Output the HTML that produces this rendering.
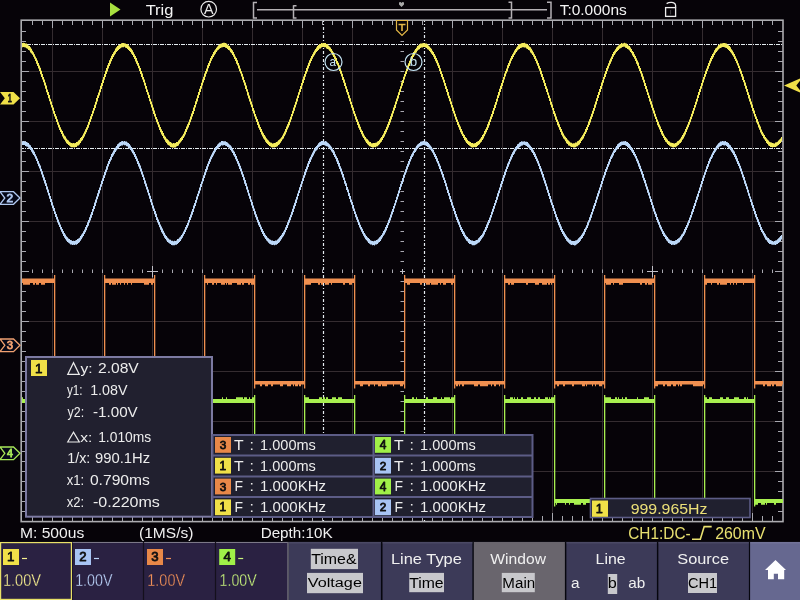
<!DOCTYPE html>
<html><head><meta charset="utf-8"><title>Scope</title>
<style>html,body{margin:0;padding:0;background:#060308;width:800px;height:600px;overflow:hidden}svg{display:block;will-change:transform}</style>
</head><body>
<svg width="800" height="600" viewBox="0 0 800 600">
<rect width="800" height="600" fill="#060308"/>
<path d="M52.5,21V521M102.5,21V521M152.5,21V521M202.5,21V521M252.5,21V521M302.5,21V521M352.5,21V521M452.5,21V521M502.5,21V521M552.5,21V521M602.5,21V521M652.5,21V521M702.5,21V521M752.5,21V521M21,71.5H782M21,121.5H782M21,171.5H782M21,221.5H782M21,321.5H782M21,371.5H782M21,421.5H782M21,471.5H782" stroke="#342c30" stroke-width="1" fill="none"/>
<path d="M32.5,20V25M32.5,521V516M32.5,269.5V273M42.5,20V25M42.5,521V516M42.5,269.5V273M52.5,20V28M52.5,521V513M52.5,269.5V273M62.5,20V25M62.5,521V516M62.5,269.5V273M72.5,20V25M72.5,521V516M72.5,269.5V273M82.5,20V25M82.5,521V516M82.5,269.5V273M92.5,20V25M92.5,521V516M92.5,269.5V273M102.5,20V28M102.5,521V513M102.5,269.5V273M112.5,20V25M112.5,521V516M112.5,269.5V273M122.5,20V25M122.5,521V516M122.5,269.5V273M132.5,20V25M132.5,521V516M132.5,269.5V273M142.5,20V25M142.5,521V516M142.5,269.5V273M152.5,20V28M152.5,521V513M152.5,269.5V273M162.5,20V25M162.5,521V516M162.5,269.5V273M172.5,20V25M172.5,521V516M172.5,269.5V273M182.5,20V25M182.5,521V516M182.5,269.5V273M192.5,20V25M192.5,521V516M192.5,269.5V273M202.5,20V28M202.5,521V513M202.5,269.5V273M212.5,20V25M212.5,521V516M212.5,269.5V273M222.5,20V25M222.5,521V516M222.5,269.5V273M232.5,20V25M232.5,521V516M232.5,269.5V273M242.5,20V25M242.5,521V516M242.5,269.5V273M252.5,20V28M252.5,521V513M252.5,269.5V273M262.5,20V25M262.5,521V516M262.5,269.5V273M272.5,20V25M272.5,521V516M272.5,269.5V273M282.5,20V25M282.5,521V516M282.5,269.5V273M292.5,20V25M292.5,521V516M292.5,269.5V273M302.5,20V28M302.5,521V513M302.5,269.5V273M312.5,20V25M312.5,521V516M312.5,269.5V273M322.5,20V25M322.5,521V516M322.5,269.5V273M332.5,20V25M332.5,521V516M332.5,269.5V273M342.5,20V25M342.5,521V516M342.5,269.5V273M352.5,20V28M352.5,521V513M352.5,269.5V273M362.5,20V25M362.5,521V516M362.5,269.5V273M372.5,20V25M372.5,521V516M372.5,269.5V273M382.5,20V25M382.5,521V516M382.5,269.5V273M392.5,20V25M392.5,521V516M392.5,269.5V273M402.5,20V28M402.5,521V513M402.5,269.5V273M412.5,20V25M412.5,521V516M412.5,269.5V273M422.5,20V25M422.5,521V516M422.5,269.5V273M432.5,20V25M432.5,521V516M432.5,269.5V273M442.5,20V25M442.5,521V516M442.5,269.5V273M452.5,20V28M452.5,521V513M452.5,269.5V273M462.5,20V25M462.5,521V516M462.5,269.5V273M472.5,20V25M472.5,521V516M472.5,269.5V273M482.5,20V25M482.5,521V516M482.5,269.5V273M492.5,20V25M492.5,521V516M492.5,269.5V273M502.5,20V28M502.5,521V513M502.5,269.5V273M512.5,20V25M512.5,521V516M512.5,269.5V273M522.5,20V25M522.5,521V516M522.5,269.5V273M532.5,20V25M532.5,521V516M532.5,269.5V273M542.5,20V25M542.5,521V516M542.5,269.5V273M552.5,20V28M552.5,521V513M552.5,269.5V273M562.5,20V25M562.5,521V516M562.5,269.5V273M572.5,20V25M572.5,521V516M572.5,269.5V273M582.5,20V25M582.5,521V516M582.5,269.5V273M592.5,20V25M592.5,521V516M592.5,269.5V273M602.5,20V28M602.5,521V513M602.5,269.5V273M612.5,20V25M612.5,521V516M612.5,269.5V273M622.5,20V25M622.5,521V516M622.5,269.5V273M632.5,20V25M632.5,521V516M632.5,269.5V273M642.5,20V25M642.5,521V516M642.5,269.5V273M652.5,20V28M652.5,521V513M652.5,269.5V273M662.5,20V25M662.5,521V516M662.5,269.5V273M672.5,20V25M672.5,521V516M672.5,269.5V273M682.5,20V25M682.5,521V516M682.5,269.5V273M692.5,20V25M692.5,521V516M692.5,269.5V273M702.5,20V28M702.5,521V513M702.5,269.5V273M712.5,20V25M712.5,521V516M712.5,269.5V273M722.5,20V25M722.5,521V516M722.5,269.5V273M732.5,20V25M732.5,521V516M732.5,269.5V273M742.5,20V25M742.5,521V516M742.5,269.5V273M752.5,20V28M752.5,521V513M752.5,269.5V273M762.5,20V25M762.5,521V516M762.5,269.5V273M772.5,20V25M772.5,521V516M772.5,269.5V273M21,31.5H26M783,31.5H778M400.5,31.5H404M21,41.5H26M783,41.5H778M400.5,41.5H404M21,51.5H26M783,51.5H778M400.5,51.5H404M21,61.5H26M783,61.5H778M400.5,61.5H404M21,71.5H29M783,71.5H775M400.5,71.5H404M21,81.5H26M783,81.5H778M400.5,81.5H404M21,91.5H26M783,91.5H778M400.5,91.5H404M21,101.5H26M783,101.5H778M400.5,101.5H404M21,111.5H26M783,111.5H778M400.5,111.5H404M21,121.5H29M783,121.5H775M400.5,121.5H404M21,131.5H26M783,131.5H778M400.5,131.5H404M21,141.5H26M783,141.5H778M400.5,141.5H404M21,151.5H26M783,151.5H778M400.5,151.5H404M21,161.5H26M783,161.5H778M400.5,161.5H404M21,171.5H29M783,171.5H775M400.5,171.5H404M21,181.5H26M783,181.5H778M400.5,181.5H404M21,191.5H26M783,191.5H778M400.5,191.5H404M21,201.5H26M783,201.5H778M400.5,201.5H404M21,211.5H26M783,211.5H778M400.5,211.5H404M21,221.5H29M783,221.5H775M400.5,221.5H404M21,231.5H26M783,231.5H778M400.5,231.5H404M21,241.5H26M783,241.5H778M400.5,241.5H404M21,251.5H26M783,251.5H778M400.5,251.5H404M21,261.5H26M783,261.5H778M400.5,261.5H404M21,271.5H29M783,271.5H775M400.5,271.5H404M21,281.5H26M783,281.5H778M400.5,281.5H404M21,291.5H26M783,291.5H778M400.5,291.5H404M21,301.5H26M783,301.5H778M400.5,301.5H404M21,311.5H26M783,311.5H778M400.5,311.5H404M21,321.5H29M783,321.5H775M400.5,321.5H404M21,331.5H26M783,331.5H778M400.5,331.5H404M21,341.5H26M783,341.5H778M400.5,341.5H404M21,351.5H26M783,351.5H778M400.5,351.5H404M21,361.5H26M783,361.5H778M400.5,361.5H404M21,371.5H29M783,371.5H775M400.5,371.5H404M21,381.5H26M783,381.5H778M400.5,381.5H404M21,391.5H26M783,391.5H778M400.5,391.5H404M21,401.5H26M783,401.5H778M400.5,401.5H404M21,411.5H26M783,411.5H778M400.5,411.5H404M21,421.5H29M783,421.5H775M400.5,421.5H404M21,431.5H26M783,431.5H778M400.5,431.5H404M21,441.5H26M783,441.5H778M400.5,441.5H404M21,451.5H26M783,451.5H778M400.5,451.5H404M21,461.5H26M783,461.5H778M400.5,461.5H404M21,471.5H29M783,471.5H775M400.5,471.5H404M21,481.5H26M783,481.5H778M400.5,481.5H404M21,491.5H26M783,491.5H778M400.5,491.5H404M21,501.5H26M783,501.5H778M400.5,501.5H404M21,511.5H26M783,511.5H778M400.5,511.5H404" stroke="#a8a8b0" stroke-width="1" fill="none"/>
<path d="M147,271.5H158M152.5,266V277.5M647,271.5H658M652.5,266V277.5M400,271.5H405M402.5,269V274" stroke="#c0c0c8" stroke-width="1" fill="none"/>
<rect x="21.2" y="20.2" width="761.8" height="501.4" fill="none" stroke="#acacb0" stroke-width="1.6"/>
<path d="M22,44.5H782M22,148.5H782" stroke="#e4ecf0" stroke-width="1.2" stroke-dasharray="1 1 4 1" stroke-dashoffset="4" fill="none"/>
<path d="M323.5,21V521M424.5,21V521" stroke="#e4ecf0" stroke-width="1.2" stroke-dasharray="1 2 3 2" stroke-dashoffset="5" fill="none"/>
<path d="M22,43.1h1V47.2h-1zM23,42.8h1V47.0h-1zM24,43.1h1V47.2h-1zM25,43.5h1V47.6h-1zM26,43.6h1V48.3h-1zM27,44.6h1V48.7h-1zM28,45.5h1V50.0h-1zM29,46.1h1V50.5h-1zM30,47.2h1V52.4h-1zM31,48.8h1V53.6h-1zM32,50.8h1V54.8h-1zM33,52.2h1V56.7h-1zM34,54.3h1V58.8h-1zM35,56.4h1V61.1h-1zM36,58.3h1V63.7h-1zM37,60.5h1V66.0h-1zM38,63.0h1V68.5h-1zM39,65.6h1V70.9h-1zM40,67.8h1V74.2h-1zM41,70.7h1V76.9h-1zM42,73.9h1V79.5h-1zM43,76.9h1V82.3h-1zM44,79.6h1V85.6h-1zM45,82.6h1V88.7h-1zM46,85.6h1V92.2h-1zM47,89.4h1V94.9h-1zM48,91.9h1V98.2h-1zM49,95.0h1V101.3h-1zM50,98.8h1V104.6h-1zM51,101.4h1V107.4h-1zM52,105.0h1V110.5h-1zM53,107.4h1V113.8h-1zM54,111.0h1V116.4h-1zM55,114.0h1V119.1h-1zM56,116.3h1V122.0h-1zM57,119.3h1V124.8h-1zM58,122.2h1V127.6h-1zM59,124.8h1V129.9h-1zM60,127.2h1V132.1h-1zM61,129.4h1V134.1h-1zM62,131.1h1V136.5h-1zM63,133.6h1V138.4h-1zM64,135.5h1V139.8h-1zM65,136.6h1V141.6h-1zM66,138.6h1V143.2h-1zM67,139.8h1V144.0h-1zM68,140.5h1V145.1h-1zM69,141.7h1V145.7h-1zM70,142.6h1V146.7h-1zM71,143.0h1V147.2h-1zM72,143.3h1V147.3h-1zM73,143.1h1V147.3h-1zM74,143.2h1V147.6h-1zM75,143.1h1V146.9h-1zM76,142.0h1V146.9h-1zM77,141.7h1V145.8h-1zM78,140.5h1V145.5h-1zM79,139.8h1V144.5h-1zM80,138.0h1V143.0h-1zM81,136.9h1V141.2h-1zM82,135.6h1V140.2h-1zM83,133.6h1V138.3h-1zM84,131.6h1V136.5h-1zM85,129.2h1V134.2h-1zM86,127.2h1V132.3h-1zM87,124.8h1V129.7h-1zM88,121.9h1V127.7h-1zM89,119.2h1V124.7h-1zM90,116.2h1V122.0h-1zM91,114.0h1V119.3h-1zM92,110.8h1V116.3h-1zM93,108.0h1V113.6h-1zM94,104.7h1V110.4h-1zM95,101.7h1V107.9h-1zM96,98.1h1V104.6h-1zM97,95.2h1V101.4h-1zM98,92.4h1V97.9h-1zM99,89.4h1V95.4h-1zM100,85.8h1V92.2h-1zM101,83.1h1V88.9h-1zM102,79.8h1V85.9h-1zM103,76.9h1V83.0h-1zM104,74.1h1V79.7h-1zM105,70.8h1V77.0h-1zM106,68.0h1V74.0h-1zM107,65.3h1V71.4h-1zM108,63.1h1V68.6h-1zM109,60.3h1V66.1h-1zM110,58.3h1V63.7h-1zM111,55.8h1V61.2h-1zM112,54.0h1V58.9h-1zM113,52.2h1V57.1h-1zM114,50.8h1V55.2h-1zM115,48.6h1V53.8h-1zM116,47.3h1V52.0h-1zM117,46.1h1V50.9h-1zM118,45.2h1V50.0h-1zM119,44.7h1V49.0h-1zM120,44.1h1V48.2h-1zM121,43.3h1V47.4h-1zM122,42.9h1V47.2h-1zM123,43.0h1V47.3h-1zM124,43.3h1V46.8h-1zM125,43.4h1V47.7h-1zM126,43.9h1V47.9h-1zM127,44.1h1V49.0h-1zM128,45.2h1V50.0h-1zM129,46.4h1V51.0h-1zM130,47.7h1V52.1h-1zM131,48.7h1V53.8h-1zM132,50.3h1V55.0h-1zM133,52.2h1V56.9h-1zM134,54.3h1V59.0h-1zM135,55.9h1V61.4h-1zM136,58.1h1V63.8h-1zM137,60.7h1V65.7h-1zM138,63.0h1V68.3h-1zM139,65.7h1V71.0h-1zM140,68.1h1V73.9h-1zM141,71.1h1V77.0h-1zM142,73.5h1V79.6h-1zM143,77.0h1V82.3h-1zM144,79.5h1V85.4h-1zM145,82.7h1V88.8h-1zM146,86.0h1V92.1h-1zM147,89.4h1V94.8h-1zM148,92.2h1V97.9h-1zM149,95.1h1V101.2h-1zM150,98.7h1V104.2h-1zM151,101.5h1V107.6h-1zM152,104.6h1V110.8h-1zM153,107.5h1V114.0h-1zM154,110.6h1V116.4h-1zM155,113.7h1V119.2h-1zM156,116.9h1V122.2h-1zM157,119.2h1V124.6h-1zM158,122.1h1V127.3h-1zM159,124.4h1V129.9h-1zM160,126.9h1V132.3h-1zM161,129.3h1V134.5h-1zM162,131.1h1V136.0h-1zM163,133.1h1V138.3h-1zM164,135.5h1V139.8h-1zM165,136.8h1V141.8h-1zM166,138.4h1V143.0h-1zM167,139.3h1V144.4h-1zM168,140.3h1V145.2h-1zM169,141.5h1V145.8h-1zM170,142.1h1V146.9h-1zM171,142.8h1V147.3h-1zM172,143.4h1V147.6h-1zM173,143.1h1V147.7h-1zM174,143.2h1V147.5h-1zM175,143.0h1V147.4h-1zM176,142.1h1V146.6h-1zM177,141.9h1V146.0h-1zM178,140.6h1V145.4h-1zM179,139.6h1V143.8h-1zM180,138.1h1V142.6h-1zM181,136.7h1V141.2h-1zM182,135.4h1V140.1h-1zM183,133.7h1V137.9h-1zM184,131.4h1V136.5h-1zM185,129.0h1V134.4h-1zM186,126.6h1V132.1h-1zM187,124.2h1V129.6h-1zM188,122.2h1V127.4h-1zM189,119.5h1V125.0h-1zM190,116.4h1V122.2h-1zM191,113.4h1V119.5h-1zM192,110.9h1V116.5h-1zM193,107.5h1V113.9h-1zM194,104.9h1V110.9h-1zM195,101.3h1V107.6h-1zM196,98.4h1V104.3h-1zM197,95.3h1V101.4h-1zM198,92.1h1V97.9h-1zM199,88.7h1V95.1h-1zM200,86.0h1V92.1h-1zM201,82.8h1V88.8h-1zM202,79.6h1V85.4h-1zM203,76.7h1V82.6h-1zM204,73.5h1V79.9h-1zM205,71.1h1V76.7h-1zM206,68.5h1V73.8h-1zM207,65.3h1V71.4h-1zM208,63.0h1V68.3h-1zM209,60.8h1V66.0h-1zM210,58.0h1V63.2h-1zM211,55.9h1V60.8h-1zM212,54.3h1V58.8h-1zM213,52.1h1V56.9h-1zM214,50.6h1V55.2h-1zM215,49.2h1V53.7h-1zM216,47.8h1V52.1h-1zM217,46.4h1V50.6h-1zM218,45.2h1V49.7h-1zM219,44.5h1V48.8h-1zM220,43.7h1V47.9h-1zM221,43.5h1V47.6h-1zM222,43.0h1V47.2h-1zM223,42.8h1V47.1h-1zM224,42.8h1V47.0h-1zM225,43.1h1V47.8h-1zM226,43.4h1V48.0h-1zM227,44.5h1V49.1h-1zM228,45.4h1V50.1h-1zM229,46.0h1V50.6h-1zM230,47.7h1V52.3h-1zM231,49.1h1V53.2h-1zM232,50.3h1V55.1h-1zM233,52.0h1V56.7h-1zM234,54.2h1V59.1h-1zM235,56.4h1V60.9h-1zM236,58.1h1V63.7h-1zM237,60.2h1V65.6h-1zM238,63.0h1V68.6h-1zM239,65.5h1V71.2h-1zM240,68.4h1V73.6h-1zM241,71.2h1V76.4h-1zM242,73.8h1V79.7h-1zM243,76.7h1V82.4h-1zM244,80.0h1V85.5h-1zM245,82.6h1V89.1h-1zM246,85.6h1V91.6h-1zM247,89.3h1V95.4h-1zM248,92.2h1V98.4h-1zM249,95.4h1V101.4h-1zM250,98.5h1V104.5h-1zM251,101.5h1V107.3h-1zM252,104.6h1V110.9h-1zM253,108.0h1V113.6h-1zM254,110.6h1V116.5h-1zM255,113.9h1V119.2h-1zM256,116.5h1V121.9h-1zM257,119.0h1V125.1h-1zM258,121.8h1V127.7h-1zM259,124.4h1V129.8h-1zM260,126.9h1V132.1h-1zM261,128.9h1V134.5h-1zM262,131.6h1V136.6h-1zM263,133.2h1V138.4h-1zM264,135.0h1V139.8h-1zM265,136.6h1V141.7h-1zM266,138.2h1V143.1h-1zM267,139.4h1V144.1h-1zM268,140.5h1V144.9h-1zM269,141.7h1V146.0h-1zM270,142.6h1V146.6h-1zM271,142.8h1V147.2h-1zM272,143.4h1V147.6h-1zM273,143.3h1V147.2h-1zM274,143.1h1V147.4h-1zM275,142.8h1V147.0h-1zM276,142.0h1V146.8h-1zM277,141.4h1V146.2h-1zM278,140.3h1V144.9h-1zM279,139.5h1V144.3h-1zM280,138.5h1V142.8h-1zM281,137.2h1V141.3h-1zM282,135.4h1V139.6h-1zM283,133.6h1V138.5h-1zM284,131.4h1V136.3h-1zM285,128.9h1V134.4h-1zM286,126.6h1V132.2h-1zM287,124.3h1V129.6h-1zM288,121.9h1V127.6h-1zM289,119.6h1V125.2h-1zM290,116.8h1V122.2h-1zM291,113.9h1V119.4h-1zM292,110.7h1V116.3h-1zM293,107.4h1V113.6h-1zM294,104.7h1V110.7h-1zM295,101.7h1V107.5h-1zM296,98.4h1V104.5h-1zM297,95.5h1V101.5h-1zM298,92.3h1V97.9h-1zM299,89.2h1V94.8h-1zM300,86.1h1V92.1h-1zM301,82.9h1V89.1h-1zM302,79.6h1V85.4h-1zM303,76.4h1V83.0h-1zM304,74.1h1V79.9h-1zM305,71.0h1V76.7h-1zM306,67.9h1V73.7h-1zM307,65.5h1V71.4h-1zM308,62.8h1V68.4h-1zM309,60.2h1V66.1h-1zM310,58.2h1V63.2h-1zM311,56.0h1V61.1h-1zM312,54.3h1V58.7h-1zM313,52.2h1V56.7h-1zM314,50.6h1V55.2h-1zM315,49.0h1V53.4h-1zM316,47.4h1V52.0h-1zM317,46.1h1V50.9h-1zM318,44.9h1V50.1h-1zM319,44.2h1V48.7h-1zM320,44.0h1V48.4h-1zM321,43.1h1V47.6h-1zM322,43.2h1V47.0h-1zM323,42.9h1V47.0h-1zM324,43.0h1V47.3h-1zM325,43.1h1V47.3h-1zM326,43.9h1V48.4h-1zM327,44.1h1V49.1h-1zM328,45.5h1V49.4h-1zM329,46.4h1V50.8h-1zM330,47.4h1V51.8h-1zM331,48.9h1V53.2h-1zM332,50.8h1V55.3h-1zM333,52.2h1V57.1h-1zM334,54.2h1V59.0h-1zM335,56.3h1V61.0h-1zM336,58.1h1V63.7h-1zM337,60.9h1V65.6h-1zM338,62.8h1V68.5h-1zM339,65.3h1V70.9h-1zM340,68.2h1V73.7h-1zM341,70.7h1V76.6h-1zM342,73.7h1V80.0h-1zM343,76.9h1V82.7h-1zM344,79.6h1V86.0h-1zM345,82.8h1V88.7h-1zM346,86.2h1V92.2h-1zM347,89.3h1V94.8h-1zM348,92.1h1V98.2h-1zM349,95.2h1V101.2h-1zM350,98.3h1V104.2h-1zM351,101.8h1V107.7h-1zM352,105.0h1V110.5h-1zM353,107.6h1V113.8h-1zM354,110.9h1V116.3h-1zM355,113.8h1V119.6h-1zM356,116.6h1V121.9h-1zM357,119.2h1V124.9h-1zM358,121.7h1V127.7h-1zM359,124.2h1V129.8h-1zM360,126.7h1V132.0h-1zM361,129.4h1V134.2h-1zM362,131.1h1V136.6h-1zM363,133.6h1V138.1h-1zM364,135.4h1V139.8h-1zM365,136.9h1V141.4h-1zM366,138.5h1V142.9h-1zM367,139.3h1V144.2h-1zM368,140.4h1V145.2h-1zM369,141.8h1V146.2h-1zM370,142.0h1V146.5h-1zM371,143.2h1V147.1h-1zM372,143.2h1V147.4h-1zM373,143.1h1V147.4h-1zM374,143.0h1V147.0h-1zM375,142.8h1V147.3h-1zM376,142.6h1V146.4h-1zM377,141.4h1V146.3h-1zM378,140.9h1V145.3h-1zM379,139.8h1V144.3h-1zM380,138.2h1V142.7h-1zM381,137.1h1V141.7h-1zM382,135.3h1V140.0h-1zM383,133.5h1V138.1h-1zM384,131.1h1V136.4h-1zM385,129.3h1V134.3h-1zM386,126.8h1V132.3h-1zM387,124.2h1V129.8h-1zM388,121.7h1V127.5h-1zM389,119.1h1V125.1h-1zM390,116.3h1V122.5h-1zM391,113.4h1V119.5h-1zM392,110.7h1V116.7h-1zM393,107.5h1V113.6h-1zM394,104.8h1V110.4h-1zM395,101.4h1V107.9h-1zM396,98.6h1V104.3h-1zM397,95.5h1V101.3h-1zM398,92.3h1V98.6h-1zM399,89.3h1V94.9h-1zM400,86.2h1V92.0h-1zM401,82.6h1V88.6h-1zM402,80.1h1V85.7h-1zM403,76.7h1V82.9h-1zM404,74.1h1V79.4h-1zM405,71.2h1V76.5h-1zM406,68.4h1V74.0h-1zM407,65.5h1V70.9h-1zM408,63.2h1V68.3h-1zM409,60.8h1V66.1h-1zM410,58.4h1V63.5h-1zM411,55.9h1V61.1h-1zM412,54.3h1V59.3h-1zM413,51.9h1V56.9h-1zM414,50.5h1V55.5h-1zM415,48.9h1V53.3h-1zM416,47.8h1V52.4h-1zM417,46.0h1V50.8h-1zM418,45.2h1V49.8h-1zM419,44.5h1V49.2h-1zM420,43.6h1V47.9h-1zM421,43.6h1V47.5h-1zM422,43.2h1V47.4h-1zM423,42.9h1V47.0h-1zM424,43.3h1V46.9h-1zM425,43.4h1V47.4h-1zM426,43.5h1V48.1h-1zM427,44.3h1V49.2h-1zM428,45.4h1V49.8h-1zM429,46.5h1V51.0h-1zM430,47.8h1V52.3h-1zM431,48.7h1V53.8h-1zM432,50.8h1V55.0h-1zM433,52.1h1V56.7h-1zM434,54.1h1V59.0h-1zM435,55.8h1V61.2h-1zM436,58.0h1V63.3h-1zM437,60.3h1V65.8h-1zM438,62.7h1V68.1h-1zM439,65.3h1V70.9h-1zM440,68.2h1V73.9h-1zM441,71.2h1V76.9h-1zM442,73.9h1V79.5h-1zM443,77.0h1V82.5h-1zM444,79.8h1V85.8h-1zM445,82.9h1V88.9h-1zM446,86.2h1V91.9h-1zM447,89.1h1V95.4h-1zM448,91.9h1V98.3h-1zM449,95.7h1V101.3h-1zM450,98.3h1V104.3h-1zM451,101.6h1V107.6h-1zM452,105.0h1V111.0h-1zM453,107.5h1V113.4h-1zM454,110.7h1V116.4h-1zM455,113.8h1V119.5h-1zM456,116.7h1V122.1h-1zM457,119.4h1V125.0h-1zM458,122.1h1V127.2h-1zM459,124.4h1V129.7h-1zM460,126.6h1V132.2h-1zM461,129.1h1V134.2h-1zM462,131.2h1V136.0h-1zM463,133.7h1V137.9h-1zM464,135.1h1V140.0h-1zM465,137.1h1V141.4h-1zM466,138.1h1V143.0h-1zM467,139.8h1V144.0h-1zM468,140.9h1V144.9h-1zM469,141.6h1V145.7h-1zM470,142.0h1V146.6h-1zM471,142.9h1V147.2h-1zM472,143.0h1V147.5h-1zM473,143.5h1V147.2h-1zM474,143.3h1V147.0h-1zM475,142.9h1V147.2h-1zM476,142.0h1V146.9h-1zM477,141.4h1V146.1h-1zM478,141.0h1V145.1h-1zM479,139.7h1V144.3h-1zM480,138.6h1V142.8h-1zM481,136.9h1V141.7h-1zM482,135.0h1V139.9h-1zM483,133.7h1V138.4h-1zM484,131.1h1V136.3h-1zM485,129.3h1V134.3h-1zM486,127.2h1V132.3h-1zM487,124.2h1V129.9h-1zM488,121.8h1V127.7h-1zM489,119.5h1V125.2h-1zM490,116.5h1V122.0h-1zM491,114.0h1V119.3h-1zM492,110.7h1V116.7h-1zM493,107.9h1V114.0h-1zM494,104.8h1V110.6h-1zM495,101.9h1V107.9h-1zM496,98.7h1V104.8h-1zM497,95.3h1V101.4h-1zM498,92.1h1V98.1h-1zM499,88.7h1V95.4h-1zM500,85.7h1V92.0h-1zM501,83.1h1V89.0h-1zM502,79.9h1V86.0h-1zM503,76.9h1V82.7h-1zM504,73.6h1V79.4h-1zM505,70.9h1V76.4h-1zM506,68.5h1V73.6h-1zM507,65.2h1V71.4h-1zM508,62.9h1V68.3h-1zM509,60.4h1V66.0h-1zM510,58.3h1V63.5h-1zM511,55.9h1V60.8h-1zM512,54.3h1V59.0h-1zM513,52.5h1V56.9h-1zM514,50.5h1V54.9h-1zM515,48.9h1V53.4h-1zM516,47.4h1V52.0h-1zM517,46.2h1V50.5h-1zM518,45.1h1V49.5h-1zM519,44.0h1V48.9h-1zM520,43.7h1V48.0h-1zM521,43.2h1V47.7h-1zM522,42.9h1V47.3h-1zM523,43.1h1V47.3h-1zM524,42.8h1V47.4h-1zM525,43.4h1V47.5h-1zM526,43.7h1V48.4h-1zM527,44.3h1V48.9h-1zM528,45.3h1V50.0h-1zM529,46.4h1V50.5h-1zM530,47.3h1V52.4h-1zM531,48.8h1V53.6h-1zM532,50.4h1V55.0h-1zM533,52.2h1V56.7h-1zM534,54.3h1V59.0h-1zM535,56.1h1V61.1h-1zM536,58.6h1V63.6h-1zM537,60.5h1V65.7h-1zM538,63.1h1V68.4h-1zM539,65.7h1V70.8h-1zM540,67.9h1V74.2h-1zM541,70.8h1V77.0h-1zM542,73.9h1V79.9h-1zM543,76.9h1V82.8h-1zM544,79.7h1V86.0h-1zM545,83.1h1V89.0h-1zM546,86.2h1V92.0h-1zM547,88.7h1V94.7h-1zM548,92.4h1V98.1h-1zM549,95.4h1V101.1h-1zM550,98.2h1V104.7h-1zM551,101.7h1V107.5h-1zM552,104.6h1V110.3h-1zM553,108.1h1V113.9h-1zM554,110.9h1V116.6h-1zM555,113.4h1V119.8h-1zM556,116.6h1V122.0h-1zM557,119.4h1V125.2h-1zM558,121.7h1V127.2h-1zM559,124.3h1V129.7h-1zM560,127.0h1V131.9h-1zM561,129.0h1V134.7h-1zM562,131.6h1V136.4h-1zM563,133.6h1V138.4h-1zM564,135.6h1V139.6h-1zM565,136.7h1V141.3h-1zM566,138.0h1V143.2h-1zM567,139.4h1V143.9h-1zM568,140.5h1V145.5h-1zM569,141.6h1V145.7h-1zM570,142.5h1V146.5h-1zM571,142.7h1V146.9h-1zM572,143.5h1V147.1h-1zM573,143.3h1V147.5h-1zM574,143.3h1V147.4h-1zM575,142.6h1V147.2h-1zM576,142.5h1V146.5h-1zM577,141.3h1V146.2h-1zM578,140.8h1V145.3h-1zM579,139.8h1V144.5h-1zM580,138.3h1V142.9h-1zM581,136.8h1V141.1h-1zM582,135.2h1V139.7h-1zM583,133.6h1V138.4h-1zM584,131.7h1V136.2h-1zM585,129.1h1V134.1h-1zM586,127.1h1V132.2h-1zM587,124.7h1V130.1h-1zM588,121.6h1V127.1h-1zM589,119.3h1V125.0h-1zM590,116.6h1V122.5h-1zM591,113.7h1V119.2h-1zM592,110.7h1V116.7h-1zM593,107.9h1V113.8h-1zM594,104.5h1V110.7h-1zM595,101.6h1V107.8h-1zM596,98.3h1V104.5h-1zM597,95.0h1V101.1h-1zM598,92.0h1V98.0h-1zM599,89.0h1V94.9h-1zM600,85.9h1V92.1h-1zM601,82.6h1V89.0h-1zM602,79.9h1V85.7h-1zM603,76.9h1V82.7h-1zM604,73.8h1V79.3h-1zM605,70.9h1V76.9h-1zM606,68.1h1V74.1h-1zM607,65.8h1V70.9h-1zM608,63.3h1V68.4h-1zM609,60.6h1V65.8h-1zM610,58.4h1V63.7h-1zM611,56.4h1V61.4h-1zM612,54.0h1V59.0h-1zM613,52.0h1V56.8h-1zM614,50.8h1V55.0h-1zM615,49.3h1V53.4h-1zM616,47.4h1V52.1h-1zM617,46.4h1V50.9h-1zM618,45.5h1V50.0h-1zM619,44.6h1V48.7h-1zM620,44.0h1V48.2h-1zM621,43.1h1V47.7h-1zM622,43.4h1V47.1h-1zM623,43.2h1V46.8h-1zM624,42.8h1V46.8h-1zM625,43.3h1V47.7h-1zM626,43.4h1V47.9h-1zM627,44.4h1V49.0h-1zM628,45.5h1V49.6h-1zM629,46.0h1V50.6h-1zM630,47.6h1V52.0h-1zM631,49.0h1V53.2h-1zM632,50.9h1V55.5h-1zM633,52.0h1V57.1h-1zM634,54.3h1V58.8h-1zM635,56.1h1V61.0h-1zM636,58.3h1V63.8h-1zM637,60.6h1V65.8h-1zM638,62.6h1V68.5h-1zM639,65.9h1V71.0h-1zM640,68.1h1V73.6h-1zM641,71.1h1V76.8h-1zM642,73.6h1V79.7h-1zM643,76.5h1V82.6h-1zM644,79.8h1V85.9h-1zM645,82.9h1V89.0h-1zM646,86.1h1V91.8h-1zM647,89.2h1V95.1h-1zM648,92.4h1V98.0h-1zM649,95.5h1V101.4h-1zM650,98.6h1V104.5h-1zM651,101.3h1V107.7h-1zM652,104.4h1V110.4h-1zM653,107.8h1V113.4h-1zM654,110.6h1V116.5h-1zM655,113.8h1V119.1h-1zM656,116.8h1V122.0h-1zM657,119.4h1V125.2h-1zM658,121.8h1V127.3h-1zM659,124.6h1V129.6h-1zM660,126.6h1V132.0h-1zM661,129.1h1V134.5h-1zM662,131.1h1V136.0h-1zM663,133.5h1V138.1h-1zM664,135.6h1V140.1h-1zM665,137.0h1V141.7h-1zM666,138.3h1V142.6h-1zM667,139.6h1V144.0h-1zM668,141.0h1V144.9h-1zM669,141.5h1V145.7h-1zM670,142.4h1V146.6h-1zM671,142.8h1V146.8h-1zM672,143.1h1V147.2h-1zM673,143.3h1V147.4h-1zM674,143.5h1V147.1h-1zM675,143.0h1V147.2h-1zM676,142.4h1V146.6h-1zM677,141.3h1V145.8h-1zM678,140.8h1V145.1h-1zM679,139.8h1V143.8h-1zM680,138.6h1V143.0h-1zM681,136.8h1V141.7h-1zM682,134.9h1V139.7h-1zM683,133.3h1V138.5h-1zM684,131.6h1V136.4h-1zM685,129.1h1V134.6h-1zM686,126.7h1V132.0h-1zM687,124.4h1V129.6h-1zM688,122.0h1V127.3h-1zM689,119.6h1V124.8h-1zM690,116.7h1V122.2h-1zM691,113.8h1V119.2h-1zM692,110.8h1V116.6h-1zM693,108.0h1V113.8h-1zM694,104.9h1V110.4h-1zM695,101.7h1V107.5h-1zM696,98.7h1V104.6h-1zM697,95.2h1V101.4h-1zM698,92.0h1V97.9h-1zM699,89.1h1V95.0h-1zM700,86.2h1V91.9h-1zM701,83.1h1V88.8h-1zM702,79.7h1V85.7h-1zM703,76.9h1V82.5h-1zM704,74.1h1V79.5h-1zM705,70.7h1V76.8h-1zM706,68.4h1V74.0h-1zM707,65.8h1V71.1h-1zM708,62.9h1V68.8h-1zM709,60.6h1V65.9h-1zM710,57.9h1V63.6h-1zM711,56.0h1V61.2h-1zM712,54.1h1V58.9h-1zM713,52.4h1V57.2h-1zM714,50.3h1V55.0h-1zM715,48.6h1V53.2h-1zM716,47.8h1V52.1h-1zM717,46.4h1V50.7h-1zM718,44.9h1V49.5h-1zM719,44.6h1V48.6h-1zM720,43.6h1V47.9h-1zM721,43.6h1V47.6h-1zM722,43.2h1V47.0h-1zM723,43.1h1V47.1h-1zM724,43.0h1V47.3h-1zM725,43.3h1V47.8h-1zM726,43.4h1V48.0h-1zM727,44.5h1V49.1h-1zM728,45.3h1V49.9h-1zM729,46.1h1V51.0h-1zM730,47.2h1V52.3h-1zM731,49.2h1V53.6h-1zM732,50.5h1V55.2h-1zM733,52.3h1V56.8h-1zM734,53.9h1V59.0h-1zM735,56.3h1V61.0h-1zM736,58.4h1V63.2h-1zM737,60.5h1V65.6h-1zM738,63.3h1V68.1h-1zM739,65.8h1V71.2h-1zM740,68.5h1V73.8h-1zM741,70.8h1V76.7h-1zM742,74.0h1V79.9h-1zM743,76.5h1V82.3h-1zM744,79.9h1V85.7h-1zM745,82.6h1V88.7h-1zM746,85.7h1V91.8h-1zM747,88.9h1V95.0h-1zM748,92.3h1V98.4h-1zM749,95.1h1V101.6h-1zM750,98.4h1V104.4h-1zM751,101.5h1V107.7h-1zM752,104.5h1V110.9h-1zM753,108.0h1V113.6h-1zM754,110.6h1V116.4h-1zM755,113.9h1V119.1h-1zM756,116.5h1V122.5h-1zM757,119.0h1V124.6h-1zM758,121.8h1V127.4h-1zM759,124.4h1V129.8h-1zM760,126.6h1V132.5h-1zM761,129.6h1V134.5h-1zM762,131.7h1V136.0h-1zM763,133.6h1V138.3h-1zM764,134.9h1V139.6h-1zM765,137.0h1V141.1h-1zM766,138.3h1V142.9h-1zM767,139.6h1V144.0h-1zM768,140.4h1V145.4h-1zM769,141.7h1V146.0h-1zM770,142.2h1V146.9h-1zM771,142.5h1V147.0h-1zM772,143.1h1V147.4h-1zM773,143.2h1V147.1h-1zM774,143.5h1V147.0h-1zM775,142.6h1V146.9h-1zM776,142.3h1V146.4h-1zM777,141.7h1V145.7h-1zM778,140.6h1V144.9h-1zM779,139.5h1V144.0h-1zM780,138.5h1V142.9h-1zM781,137.0h1V141.3h-1z" fill="#f4ec5c"/>
<path d="M22,141.5h1V145.0h-1zM23,140.9h1V145.0h-1zM24,141.5h1V145.0h-1zM25,141.4h1V145.9h-1zM26,142.0h1V146.4h-1zM27,142.4h1V146.8h-1zM28,143.0h1V147.7h-1zM29,144.5h1V148.8h-1zM30,145.3h1V150.1h-1zM31,147.0h1V151.8h-1zM32,148.2h1V153.4h-1zM33,150.2h1V155.1h-1zM34,151.8h1V156.6h-1zM35,154.3h1V158.7h-1zM36,156.3h1V161.0h-1zM37,158.4h1V163.8h-1zM38,160.9h1V166.2h-1zM39,163.6h1V168.6h-1zM40,165.6h1V171.2h-1zM41,168.7h1V174.6h-1zM42,171.3h1V177.5h-1zM43,174.5h1V180.5h-1zM44,177.2h1V183.5h-1zM45,180.1h1V186.1h-1zM46,183.2h1V189.5h-1zM47,186.5h1V192.5h-1zM48,189.5h1V195.5h-1zM49,192.9h1V198.8h-1zM50,196.1h1V202.0h-1zM51,199.1h1V205.4h-1zM52,202.3h1V208.3h-1zM53,205.4h1V211.0h-1zM54,208.0h1V214.0h-1zM55,211.5h1V216.9h-1zM56,213.9h1V219.5h-1zM57,216.7h1V222.4h-1zM58,219.4h1V224.7h-1zM59,222.3h1V227.1h-1zM60,224.6h1V229.6h-1zM61,227.1h1V231.8h-1zM62,229.0h1V233.7h-1zM63,230.9h1V236.0h-1zM64,233.0h1V237.7h-1zM65,234.6h1V239.2h-1zM66,236.2h1V240.8h-1zM67,237.2h1V242.1h-1zM68,238.5h1V242.7h-1zM69,239.0h1V243.4h-1zM70,240.1h1V244.4h-1zM71,240.2h1V244.6h-1zM72,241.1h1V244.9h-1zM73,240.8h1V244.8h-1zM74,240.9h1V244.9h-1zM75,240.5h1V244.6h-1zM76,240.0h1V244.7h-1zM77,239.1h1V243.9h-1zM78,238.5h1V243.0h-1zM79,237.7h1V242.2h-1zM80,236.0h1V240.7h-1zM81,234.6h1V239.3h-1zM82,233.3h1V237.6h-1zM83,231.3h1V236.1h-1zM84,229.4h1V233.9h-1zM85,227.1h1V232.2h-1zM86,224.9h1V230.2h-1zM87,222.2h1V227.6h-1zM88,220.0h1V225.8h-1zM89,217.2h1V222.8h-1zM90,214.5h1V220.6h-1zM91,211.9h1V217.8h-1zM92,209.1h1V215.0h-1zM93,205.9h1V211.6h-1zM94,202.6h1V208.9h-1zM95,199.5h1V206.0h-1zM96,196.5h1V202.7h-1zM97,193.2h1V199.3h-1zM98,190.1h1V196.6h-1zM99,187.4h1V193.5h-1zM100,184.2h1V190.2h-1zM101,180.8h1V186.8h-1zM102,178.2h1V184.1h-1zM103,175.3h1V180.9h-1zM104,171.9h1V177.9h-1zM105,169.4h1V175.2h-1zM106,166.2h1V172.3h-1zM107,163.8h1V169.7h-1zM108,161.0h1V166.5h-1zM109,158.9h1V163.9h-1zM110,156.8h1V161.6h-1zM111,154.1h1V159.7h-1zM112,152.6h1V157.0h-1zM113,150.6h1V155.5h-1zM114,148.7h1V153.7h-1zM115,147.5h1V152.1h-1zM116,145.9h1V150.4h-1zM117,144.2h1V149.2h-1zM118,143.6h1V148.1h-1zM119,142.6h1V146.7h-1zM120,142.0h1V146.1h-1zM121,141.3h1V145.5h-1zM122,141.1h1V145.4h-1zM123,141.4h1V144.8h-1zM124,141.0h1V145.2h-1zM125,141.6h1V145.3h-1zM126,141.5h1V146.2h-1zM127,142.5h1V146.6h-1zM128,142.9h1V147.9h-1zM129,144.1h1V148.7h-1zM130,145.6h1V150.0h-1zM131,147.1h1V151.5h-1zM132,148.5h1V153.2h-1zM133,150.2h1V154.8h-1zM134,151.9h1V157.1h-1zM135,154.0h1V159.1h-1zM136,156.3h1V161.3h-1zM137,158.5h1V163.9h-1zM138,160.9h1V166.4h-1zM139,163.2h1V168.8h-1zM140,165.6h1V171.5h-1zM141,168.5h1V174.5h-1zM142,171.5h1V177.0h-1zM143,174.5h1V180.1h-1zM144,177.4h1V183.7h-1zM145,180.6h1V186.6h-1zM146,183.4h1V189.4h-1zM147,186.7h1V192.4h-1zM148,189.5h1V195.6h-1zM149,193.0h1V198.8h-1zM150,195.8h1V202.3h-1zM151,199.1h1V205.2h-1zM152,202.5h1V208.5h-1zM153,205.6h1V211.1h-1zM154,208.4h1V214.3h-1zM155,211.1h1V216.9h-1zM156,213.8h1V220.0h-1zM157,217.2h1V222.5h-1zM158,219.5h1V224.8h-1zM159,222.1h1V227.3h-1zM160,224.4h1V229.8h-1zM161,226.5h1V232.2h-1zM162,228.6h1V233.8h-1zM163,230.7h1V235.8h-1zM164,232.7h1V237.8h-1zM165,234.8h1V239.0h-1zM166,236.0h1V240.6h-1zM167,237.4h1V242.1h-1zM168,238.5h1V242.7h-1zM169,239.4h1V243.6h-1zM170,239.8h1V244.0h-1zM171,240.7h1V244.9h-1zM172,240.8h1V245.2h-1zM173,241.3h1V245.3h-1zM174,240.8h1V245.2h-1zM175,240.9h1V244.8h-1zM176,240.4h1V244.7h-1zM177,239.0h1V244.1h-1zM178,238.8h1V242.9h-1zM179,237.4h1V242.0h-1zM180,236.4h1V241.0h-1zM181,234.9h1V239.3h-1zM182,233.4h1V237.8h-1zM183,231.6h1V235.8h-1zM184,229.4h1V234.1h-1zM185,227.0h1V232.1h-1zM186,225.0h1V229.8h-1zM187,222.7h1V227.8h-1zM188,220.0h1V225.4h-1zM189,217.1h1V222.6h-1zM190,214.4h1V220.0h-1zM191,211.5h1V217.5h-1zM192,208.9h1V214.8h-1zM193,205.6h1V212.1h-1zM194,202.9h1V208.5h-1zM195,200.0h1V206.0h-1zM196,196.5h1V202.8h-1zM197,193.8h1V199.6h-1zM198,190.7h1V196.2h-1zM199,187.4h1V193.6h-1zM200,184.0h1V190.4h-1zM201,181.4h1V187.0h-1zM202,178.3h1V183.8h-1zM203,175.3h1V181.2h-1zM204,172.2h1V177.9h-1zM205,169.1h1V175.3h-1zM206,166.2h1V172.2h-1zM207,163.8h1V169.7h-1zM208,161.3h1V166.6h-1zM209,158.7h1V164.0h-1zM210,156.6h1V161.7h-1zM211,154.4h1V159.3h-1zM212,152.4h1V157.2h-1zM213,150.8h1V155.5h-1zM214,149.1h1V153.4h-1zM215,147.1h1V151.7h-1zM216,145.9h1V150.0h-1zM217,144.5h1V148.9h-1zM218,143.4h1V147.8h-1zM219,142.4h1V147.0h-1zM220,142.2h1V146.2h-1zM221,141.1h1V145.3h-1zM222,141.1h1V145.6h-1zM223,141.3h1V145.2h-1zM224,141.3h1V145.1h-1zM225,141.3h1V145.7h-1zM226,141.9h1V146.1h-1zM227,142.4h1V147.0h-1zM228,143.5h1V147.5h-1zM229,144.4h1V148.7h-1zM230,145.2h1V150.0h-1zM231,146.6h1V151.4h-1zM232,148.6h1V153.1h-1zM233,150.4h1V155.2h-1zM234,151.7h1V156.7h-1zM235,154.1h1V159.2h-1zM236,155.9h1V161.3h-1zM237,158.7h1V163.8h-1zM238,161.1h1V166.3h-1zM239,163.3h1V169.1h-1zM240,165.8h1V171.2h-1zM241,168.4h1V174.6h-1zM242,171.4h1V177.0h-1zM243,174.3h1V180.2h-1zM244,177.3h1V183.7h-1zM245,180.1h1V186.1h-1zM246,183.3h1V189.5h-1zM247,186.5h1V192.6h-1zM248,189.8h1V195.8h-1zM249,193.2h1V198.8h-1zM250,195.9h1V201.8h-1zM251,199.4h1V205.4h-1zM252,202.1h1V208.2h-1zM253,205.6h1V210.9h-1zM254,208.4h1V214.4h-1zM255,211.2h1V217.3h-1zM256,214.3h1V219.7h-1zM257,216.8h1V222.6h-1zM258,219.8h1V225.2h-1zM259,222.1h1V227.1h-1zM260,224.5h1V229.6h-1zM261,226.7h1V232.1h-1zM262,229.0h1V234.0h-1zM263,231.0h1V235.9h-1zM264,233.1h1V237.6h-1zM265,234.7h1V239.1h-1zM266,236.1h1V240.4h-1zM267,237.4h1V241.6h-1zM268,238.2h1V242.8h-1zM269,239.3h1V243.7h-1zM270,239.7h1V244.2h-1zM271,240.5h1V244.8h-1zM272,240.6h1V244.9h-1zM273,241.0h1V244.8h-1zM274,241.1h1V245.2h-1zM275,240.6h1V244.7h-1zM276,240.4h1V244.7h-1zM277,239.4h1V244.0h-1zM278,238.5h1V243.1h-1zM279,237.3h1V242.3h-1zM280,235.9h1V240.7h-1zM281,234.8h1V239.2h-1zM282,233.0h1V237.5h-1zM283,231.5h1V236.3h-1zM284,229.7h1V234.4h-1zM285,227.2h1V232.3h-1zM286,225.1h1V229.9h-1zM287,222.2h1V228.0h-1zM288,219.8h1V225.2h-1zM289,217.2h1V222.7h-1zM290,214.8h1V220.3h-1zM291,211.7h1V217.3h-1zM292,208.7h1V214.8h-1zM293,205.6h1V212.1h-1zM294,202.7h1V208.7h-1zM295,199.5h1V205.9h-1zM296,196.8h1V202.9h-1zM297,193.4h1V199.4h-1zM298,190.6h1V196.1h-1zM299,187.2h1V193.1h-1zM300,184.3h1V190.0h-1zM301,181.3h1V187.0h-1zM302,178.2h1V183.8h-1zM303,175.2h1V180.9h-1zM304,171.8h1V177.7h-1zM305,169.0h1V175.2h-1zM306,166.4h1V172.2h-1zM307,163.6h1V169.4h-1zM308,161.1h1V167.0h-1zM309,158.6h1V164.0h-1zM310,156.8h1V162.0h-1zM311,154.4h1V159.6h-1zM312,152.5h1V157.2h-1zM313,150.6h1V155.4h-1zM314,148.5h1V153.4h-1zM315,147.1h1V151.6h-1zM316,145.9h1V150.6h-1zM317,144.7h1V149.4h-1zM318,143.3h1V147.6h-1zM319,142.3h1V146.7h-1zM320,141.8h1V146.0h-1zM321,141.1h1V145.6h-1zM322,140.9h1V145.0h-1zM323,141.0h1V144.8h-1zM324,141.5h1V145.3h-1zM325,141.0h1V145.7h-1zM326,141.5h1V146.3h-1zM327,142.4h1V146.6h-1zM328,143.2h1V147.5h-1zM329,144.2h1V148.7h-1zM330,145.4h1V149.8h-1zM331,146.7h1V151.4h-1zM332,148.5h1V152.7h-1zM333,150.1h1V154.9h-1zM334,151.6h1V156.9h-1zM335,154.2h1V158.8h-1zM336,156.2h1V161.4h-1zM337,158.0h1V164.0h-1zM338,160.4h1V166.5h-1zM339,163.0h1V169.1h-1zM340,166.3h1V171.6h-1zM341,168.6h1V174.5h-1zM342,171.4h1V177.4h-1zM343,174.1h1V180.0h-1zM344,177.4h1V183.7h-1zM345,180.8h1V186.1h-1zM346,183.3h1V189.9h-1zM347,187.0h1V192.3h-1zM348,189.5h1V195.9h-1zM349,192.9h1V199.0h-1zM350,195.9h1V202.3h-1zM351,199.5h1V204.8h-1zM352,202.0h1V208.5h-1zM353,205.1h1V211.1h-1zM354,208.4h1V214.0h-1zM355,211.6h1V217.2h-1zM356,214.2h1V219.8h-1zM357,216.8h1V222.3h-1zM358,219.4h1V224.9h-1zM359,222.2h1V227.6h-1zM360,224.7h1V229.4h-1zM361,227.0h1V231.8h-1zM362,228.7h1V233.7h-1zM363,231.1h1V235.8h-1zM364,233.0h1V237.4h-1zM365,234.6h1V239.3h-1zM366,236.1h1V240.3h-1zM367,237.3h1V241.6h-1zM368,238.1h1V242.9h-1zM369,239.0h1V243.7h-1zM370,240.2h1V244.5h-1zM371,240.7h1V244.6h-1zM372,241.0h1V245.3h-1zM373,241.2h1V244.9h-1zM374,240.7h1V245.4h-1zM375,240.7h1V244.6h-1zM376,239.9h1V244.6h-1zM377,239.5h1V244.0h-1zM378,238.5h1V242.8h-1zM379,237.3h1V242.1h-1zM380,236.2h1V241.0h-1zM381,235.1h1V239.3h-1zM382,233.3h1V237.4h-1zM383,231.1h1V235.8h-1zM384,229.6h1V234.5h-1zM385,226.9h1V232.6h-1zM386,225.1h1V230.4h-1zM387,222.8h1V228.0h-1zM388,219.7h1V225.2h-1zM389,217.6h1V223.0h-1zM390,214.4h1V220.4h-1zM391,211.5h1V217.5h-1zM392,209.0h1V214.4h-1zM393,206.1h1V212.1h-1zM394,203.2h1V208.6h-1zM395,199.9h1V205.4h-1zM396,196.8h1V202.5h-1zM397,193.8h1V199.6h-1zM398,190.4h1V196.5h-1zM399,187.1h1V193.3h-1zM400,183.8h1V189.9h-1zM401,181.2h1V186.7h-1zM402,178.1h1V184.1h-1zM403,174.7h1V180.9h-1zM404,172.3h1V177.8h-1zM405,169.2h1V174.8h-1zM406,166.3h1V172.5h-1zM407,163.8h1V169.4h-1zM408,161.0h1V166.7h-1zM409,159.0h1V164.5h-1zM410,156.2h1V161.4h-1zM411,154.2h1V159.3h-1zM412,152.6h1V157.0h-1zM413,150.7h1V155.4h-1zM414,149.0h1V153.0h-1zM415,147.4h1V152.0h-1zM416,145.7h1V150.4h-1zM417,144.5h1V148.8h-1zM418,143.7h1V147.8h-1zM419,142.9h1V146.8h-1zM420,141.8h1V146.2h-1zM421,141.5h1V145.8h-1zM422,141.3h1V145.2h-1zM423,140.9h1V145.1h-1zM424,141.2h1V145.3h-1zM425,141.4h1V145.5h-1zM426,141.5h1V145.9h-1zM427,142.1h1V147.1h-1zM428,142.9h1V147.5h-1zM429,144.2h1V149.2h-1zM430,145.6h1V149.8h-1zM431,146.7h1V151.3h-1zM432,148.4h1V152.8h-1zM433,149.8h1V154.7h-1zM434,152.2h1V157.0h-1zM435,154.0h1V159.0h-1zM436,156.1h1V161.5h-1zM437,158.3h1V163.6h-1zM438,161.1h1V166.2h-1zM439,163.4h1V168.9h-1zM440,165.8h1V171.5h-1zM441,169.0h1V174.4h-1zM442,171.5h1V177.4h-1zM443,174.1h1V180.1h-1zM444,177.4h1V183.0h-1zM445,180.2h1V186.2h-1zM446,183.3h1V189.7h-1zM447,186.8h1V192.9h-1zM448,189.8h1V195.8h-1zM449,192.9h1V199.3h-1zM450,196.0h1V202.0h-1zM451,199.3h1V205.4h-1zM452,202.2h1V208.1h-1zM453,205.5h1V211.0h-1zM454,208.1h1V214.3h-1zM455,210.9h1V217.3h-1zM456,213.9h1V219.9h-1zM457,216.7h1V222.6h-1zM458,219.3h1V224.7h-1zM459,221.8h1V227.2h-1zM460,224.7h1V230.0h-1zM461,227.1h1V231.9h-1zM462,229.1h1V234.1h-1zM463,230.9h1V236.0h-1zM464,232.5h1V237.5h-1zM465,234.8h1V239.2h-1zM466,236.2h1V240.8h-1zM467,236.9h1V241.6h-1zM468,238.5h1V242.9h-1zM469,239.0h1V244.0h-1zM470,239.9h1V244.1h-1zM471,240.4h1V244.5h-1zM472,240.6h1V245.2h-1zM473,240.9h1V245.3h-1zM474,240.9h1V245.3h-1zM475,240.5h1V244.8h-1zM476,240.1h1V244.3h-1zM477,239.7h1V243.6h-1zM478,238.2h1V242.8h-1zM479,237.3h1V242.2h-1zM480,236.0h1V240.8h-1zM481,234.9h1V239.2h-1zM482,233.4h1V237.8h-1zM483,231.2h1V236.4h-1zM484,229.5h1V234.5h-1zM485,226.9h1V232.1h-1zM486,224.6h1V230.2h-1zM487,222.2h1V228.0h-1zM488,220.1h1V225.3h-1zM489,217.4h1V222.9h-1zM490,215.0h1V220.5h-1zM491,211.8h1V217.5h-1zM492,208.7h1V214.5h-1zM493,206.1h1V211.8h-1zM494,203.0h1V208.7h-1zM495,200.1h1V205.5h-1zM496,196.8h1V202.7h-1zM497,193.2h1V199.7h-1zM498,190.5h1V196.4h-1zM499,187.4h1V193.3h-1zM500,183.8h1V189.9h-1zM501,181.1h1V187.2h-1zM502,177.8h1V184.0h-1zM503,174.9h1V181.2h-1zM504,171.8h1V177.7h-1zM505,169.2h1V175.3h-1zM506,166.4h1V171.9h-1zM507,163.6h1V169.1h-1zM508,161.5h1V166.7h-1zM509,159.0h1V164.3h-1zM510,156.4h1V161.6h-1zM511,154.2h1V159.5h-1zM512,152.2h1V157.2h-1zM513,150.5h1V155.0h-1zM514,148.8h1V153.7h-1zM515,146.9h1V151.4h-1zM516,146.0h1V150.2h-1zM517,144.3h1V149.0h-1zM518,143.7h1V147.9h-1zM519,142.5h1V147.2h-1zM520,141.9h1V146.4h-1zM521,141.3h1V145.8h-1zM522,141.5h1V145.4h-1zM523,141.4h1V144.8h-1zM524,141.2h1V144.9h-1zM525,141.7h1V145.5h-1zM526,141.8h1V145.9h-1zM527,142.1h1V147.1h-1zM528,143.2h1V147.8h-1zM529,144.4h1V149.2h-1zM530,145.7h1V149.9h-1zM531,147.1h1V151.7h-1zM532,148.4h1V153.0h-1zM533,150.2h1V155.1h-1zM534,152.1h1V157.0h-1zM535,153.8h1V158.9h-1zM536,156.2h1V161.2h-1zM537,158.4h1V163.5h-1zM538,160.7h1V166.1h-1zM539,163.4h1V169.0h-1zM540,166.0h1V171.6h-1zM541,168.4h1V174.4h-1zM542,171.6h1V177.6h-1zM543,174.1h1V180.5h-1zM544,177.5h1V183.5h-1zM545,180.3h1V186.3h-1zM546,183.4h1V189.8h-1zM547,186.5h1V192.8h-1zM548,189.8h1V195.9h-1zM549,193.1h1V199.1h-1zM550,196.0h1V202.4h-1zM551,199.3h1V205.3h-1zM552,202.6h1V208.1h-1zM553,205.1h1V211.0h-1zM554,208.2h1V213.9h-1zM555,211.3h1V217.3h-1zM556,214.3h1V220.0h-1zM557,217.1h1V222.5h-1zM558,219.3h1V225.2h-1zM559,222.1h1V227.4h-1zM560,224.3h1V229.9h-1zM561,226.6h1V231.9h-1zM562,229.1h1V234.0h-1zM563,230.9h1V235.8h-1zM564,232.5h1V237.2h-1zM565,234.3h1V238.9h-1zM566,235.7h1V240.8h-1zM567,237.3h1V241.8h-1zM568,238.2h1V242.8h-1zM569,239.4h1V243.8h-1zM570,239.7h1V244.4h-1zM571,240.7h1V245.0h-1zM572,241.0h1V244.8h-1zM573,241.0h1V245.0h-1zM574,240.9h1V245.4h-1zM575,240.6h1V245.2h-1zM576,240.2h1V244.6h-1zM577,239.6h1V243.7h-1zM578,238.3h1V243.1h-1zM579,237.2h1V241.9h-1zM580,236.3h1V240.7h-1zM581,234.7h1V239.0h-1zM582,233.3h1V237.9h-1zM583,231.6h1V235.9h-1zM584,229.1h1V234.6h-1zM585,227.4h1V232.0h-1zM586,225.2h1V229.8h-1zM587,222.3h1V228.0h-1zM588,220.2h1V225.4h-1zM589,217.2h1V222.6h-1zM590,214.4h1V220.5h-1zM591,212.0h1V217.7h-1zM592,208.7h1V214.6h-1zM593,205.6h1V211.6h-1zM594,202.9h1V208.7h-1zM595,199.8h1V206.0h-1zM596,196.6h1V202.8h-1zM597,193.2h1V199.4h-1zM598,190.6h1V196.5h-1zM599,187.5h1V193.6h-1zM600,184.2h1V190.1h-1zM601,181.1h1V187.3h-1zM602,177.7h1V184.1h-1zM603,175.2h1V180.8h-1zM604,171.9h1V177.7h-1zM605,169.0h1V175.2h-1zM606,166.7h1V172.0h-1zM607,164.0h1V169.5h-1zM608,161.6h1V166.8h-1zM609,159.1h1V164.4h-1zM610,156.5h1V161.8h-1zM611,154.6h1V159.1h-1zM612,152.4h1V157.6h-1zM613,150.4h1V155.5h-1zM614,149.1h1V153.1h-1zM615,147.5h1V151.9h-1zM616,145.9h1V150.2h-1zM617,144.3h1V149.2h-1zM618,143.5h1V147.9h-1zM619,142.7h1V147.1h-1zM620,142.0h1V146.2h-1zM621,141.6h1V145.5h-1zM622,141.4h1V145.0h-1zM623,141.3h1V145.1h-1zM624,141.3h1V145.0h-1zM625,141.1h1V145.6h-1zM626,141.8h1V146.0h-1zM627,142.1h1V147.0h-1zM628,143.1h1V147.9h-1zM629,144.1h1V148.8h-1zM630,145.5h1V150.0h-1zM631,146.9h1V151.4h-1zM632,148.4h1V153.0h-1zM633,149.9h1V155.1h-1zM634,152.1h1V156.5h-1zM635,154.1h1V158.6h-1zM636,155.9h1V161.3h-1zM637,158.5h1V163.4h-1zM638,160.5h1V166.4h-1zM639,163.2h1V169.0h-1zM640,165.8h1V171.5h-1zM641,168.7h1V174.4h-1zM642,171.2h1V177.7h-1zM643,174.1h1V180.5h-1zM644,177.7h1V183.2h-1zM645,180.1h1V186.4h-1zM646,183.5h1V189.4h-1zM647,186.4h1V192.7h-1zM648,189.4h1V195.5h-1zM649,192.6h1V198.6h-1zM650,196.3h1V202.0h-1zM651,199.1h1V204.9h-1zM652,202.2h1V208.5h-1zM653,205.3h1V211.4h-1zM654,208.2h1V214.2h-1zM655,211.4h1V216.9h-1zM656,213.8h1V219.9h-1zM657,217.0h1V222.4h-1zM658,219.5h1V224.8h-1zM659,222.0h1V227.5h-1zM660,224.8h1V229.5h-1zM661,226.7h1V231.6h-1zM662,229.2h1V234.0h-1zM663,231.1h1V236.0h-1zM664,232.8h1V237.1h-1zM665,234.4h1V238.9h-1zM666,235.7h1V240.6h-1zM667,237.0h1V241.4h-1zM668,238.6h1V243.0h-1zM669,239.4h1V243.5h-1zM670,240.3h1V244.1h-1zM671,240.5h1V245.1h-1zM672,241.0h1V244.8h-1zM673,240.9h1V244.8h-1zM674,240.9h1V245.1h-1zM675,240.3h1V244.5h-1zM676,240.0h1V244.3h-1zM677,239.1h1V243.6h-1zM678,238.3h1V242.8h-1zM679,237.4h1V242.3h-1zM680,236.3h1V240.6h-1zM681,234.5h1V239.5h-1zM682,233.5h1V237.5h-1zM683,231.5h1V235.9h-1zM684,229.1h1V234.4h-1zM685,226.9h1V232.4h-1zM686,224.9h1V230.0h-1zM687,222.4h1V227.8h-1zM688,220.3h1V225.4h-1zM689,217.5h1V222.9h-1zM690,214.9h1V219.9h-1zM691,211.5h1V217.4h-1zM692,209.0h1V214.4h-1zM693,205.8h1V212.1h-1zM694,203.1h1V208.8h-1zM695,199.8h1V205.9h-1zM696,196.6h1V202.5h-1zM697,193.8h1V199.7h-1zM698,190.7h1V196.7h-1zM699,187.6h1V193.1h-1zM700,184.2h1V190.4h-1zM701,181.0h1V187.2h-1zM702,177.8h1V184.1h-1zM703,175.3h1V181.1h-1zM704,172.3h1V177.7h-1zM705,169.6h1V174.7h-1zM706,166.2h1V172.0h-1zM707,164.1h1V169.1h-1zM708,161.0h1V166.8h-1zM709,158.5h1V163.8h-1zM710,156.8h1V161.6h-1zM711,154.6h1V159.1h-1zM712,152.5h1V157.4h-1zM713,150.7h1V155.0h-1zM714,148.7h1V153.3h-1zM715,147.4h1V151.8h-1zM716,145.7h1V150.2h-1zM717,144.5h1V148.7h-1zM718,143.3h1V147.7h-1zM719,142.6h1V146.7h-1zM720,141.6h1V146.3h-1zM721,141.5h1V145.7h-1zM722,140.9h1V145.0h-1zM723,141.2h1V145.2h-1zM724,141.3h1V145.4h-1zM725,141.1h1V145.3h-1zM726,141.9h1V146.0h-1zM727,142.2h1V147.0h-1zM728,143.1h1V148.0h-1zM729,144.4h1V148.7h-1zM730,145.2h1V150.2h-1zM731,147.1h1V151.8h-1zM732,148.3h1V153.3h-1zM733,150.2h1V154.9h-1zM734,151.6h1V157.1h-1zM735,153.9h1V159.2h-1zM736,155.7h1V161.5h-1zM737,158.2h1V164.0h-1zM738,161.0h1V166.1h-1zM739,163.2h1V168.6h-1zM740,165.7h1V171.3h-1zM741,168.6h1V174.3h-1zM742,171.6h1V177.4h-1zM743,174.6h1V180.3h-1zM744,177.1h1V183.7h-1zM745,180.6h1V186.3h-1zM746,183.4h1V189.3h-1zM747,186.4h1V192.5h-1zM748,189.7h1V195.7h-1zM749,193.3h1V198.6h-1zM750,196.4h1V201.9h-1zM751,199.3h1V205.5h-1zM752,202.2h1V207.9h-1zM753,205.1h1V211.0h-1zM754,208.3h1V214.3h-1zM755,211.0h1V217.3h-1zM756,214.1h1V219.6h-1zM757,216.9h1V222.3h-1zM758,219.3h1V224.9h-1zM759,221.9h1V227.1h-1zM760,224.3h1V230.0h-1zM761,227.0h1V231.9h-1zM762,229.2h1V233.5h-1zM763,231.0h1V235.5h-1zM764,232.7h1V237.5h-1zM765,234.3h1V239.4h-1zM766,236.2h1V240.2h-1zM767,237.5h1V241.7h-1zM768,238.0h1V242.9h-1zM769,239.2h1V243.9h-1zM770,240.0h1V244.1h-1zM771,240.4h1V244.4h-1zM772,241.1h1V244.7h-1zM773,241.4h1V244.7h-1zM774,240.9h1V244.8h-1zM775,240.5h1V245.1h-1zM776,240.2h1V244.2h-1zM777,239.2h1V244.0h-1zM778,238.2h1V243.0h-1zM779,237.3h1V242.2h-1zM780,236.0h1V241.1h-1zM781,234.9h1V239.5h-1z" fill="#bcd8f8"/>
<path d="M22,278.6H55V283H22zM41,283h2v1.8h-2zM28,283h2v1.8h-2zM36,283h2v1.8h-2zM36,283h3v1.8h-3zM26,283h2v1.8h-2zM23,283h1v1.8h-1zM33,283h2v1.8h-2zM43,283h2v1.8h-2zM24,283h3v1.8h-3zM54,381H105V384.5H54zM78,384.5h2v1.8h-2zM73,384.5h2v1.8h-2zM99,384.5h2v1.8h-2zM95,384.5h1v1.8h-1zM102,384.5h1v1.8h-1zM88,384.5h3v1.8h-3zM57,384.5h1v1.8h-1zM75,384.5h3v1.8h-3zM74,384.5h3v1.8h-3zM65,384.5h1v1.8h-1zM75,384.5h2v1.8h-2zM69,384.5h2v1.8h-2zM97,384.5h1v1.8h-1zM89,384.5h1v1.8h-1zM104,278.6H155V283H104zM147,283h2v1.8h-2zM110,283h1v1.8h-1zM110,283h1v1.8h-1zM131,283h1v1.8h-1zM114,283h2v1.8h-2zM112,283h1v1.8h-1zM117,283h1v1.8h-1zM120,283h1v1.8h-1zM124,283h1v1.8h-1zM109,283h1v1.8h-1zM151,283h2v1.8h-2zM127,283h1v1.8h-1zM144,283h3v1.8h-3zM112,283h2v1.8h-2zM154,381H205V384.5H154zM168,384.5h2v1.8h-2zM164,384.5h1v1.8h-1zM174,384.5h1v1.8h-1zM200,384.5h3v1.8h-3zM162,384.5h1v1.8h-1zM189,384.5h1v1.8h-1zM194,384.5h1v1.8h-1zM160,384.5h3v1.8h-3zM179,384.5h3v1.8h-3zM196,384.5h1v1.8h-1zM162,384.5h3v1.8h-3zM169,384.5h1v1.8h-1zM183,384.5h2v1.8h-2zM191,384.5h2v1.8h-2zM204,278.6H255V283H204zM237,283h1v1.8h-1zM226,283h1v1.8h-1zM228,283h1v1.8h-1zM212,283h2v1.8h-2zM228,283h2v1.8h-2zM221,283h2v1.8h-2zM207,283h1v1.8h-1zM251,283h3v1.8h-3zM216,283h1v1.8h-1zM238,283h3v1.8h-3zM229,283h3v1.8h-3zM242,283h2v1.8h-2zM223,283h2v1.8h-2zM248,283h2v1.8h-2zM254,381H305V384.5H254zM260,384.5h2v1.8h-2zM271,384.5h2v1.8h-2zM281,384.5h2v1.8h-2zM293,384.5h1v1.8h-1zM295,384.5h2v1.8h-2zM287,384.5h1v1.8h-1zM266,384.5h2v1.8h-2zM281,384.5h1v1.8h-1zM299,384.5h2v1.8h-2zM282,384.5h1v1.8h-1zM288,384.5h3v1.8h-3zM297,384.5h1v1.8h-1zM280,384.5h2v1.8h-2zM265,384.5h1v1.8h-1zM304,278.6H355V283H304zM321,283h2v1.8h-2zM350,283h2v1.8h-2zM349,283h2v1.8h-2zM318,283h2v1.8h-2zM305,283h3v1.8h-3zM343,283h2v1.8h-2zM328,283h1v1.8h-1zM309,283h1v1.8h-1zM308,283h3v1.8h-3zM331,283h1v1.8h-1zM326,283h3v1.8h-3zM327,283h2v1.8h-2zM305,283h2v1.8h-2zM325,283h2v1.8h-2zM354,381H405V384.5H354zM401,384.5h2v1.8h-2zM384,384.5h3v1.8h-3zM360,384.5h2v1.8h-2zM393,384.5h1v1.8h-1zM362,384.5h1v1.8h-1zM378,384.5h1v1.8h-1zM374,384.5h1v1.8h-1zM368,384.5h2v1.8h-2zM382,384.5h2v1.8h-2zM400,384.5h2v1.8h-2zM385,384.5h2v1.8h-2zM360,384.5h2v1.8h-2zM386,384.5h1v1.8h-1zM379,384.5h2v1.8h-2zM404,278.6H455V283H404zM443,283h3v1.8h-3zM431,283h2v1.8h-2zM408,283h1v1.8h-1zM440,283h1v1.8h-1zM451,283h2v1.8h-2zM409,283h1v1.8h-1zM426,283h3v1.8h-3zM432,283h3v1.8h-3zM420,283h2v1.8h-2zM443,283h1v1.8h-1zM428,283h2v1.8h-2zM408,283h1v1.8h-1zM407,283h2v1.8h-2zM435,283h3v1.8h-3zM454,381H505V384.5H454zM491,384.5h1v1.8h-1zM474,384.5h3v1.8h-3zM486,384.5h2v1.8h-2zM476,384.5h2v1.8h-2zM456,384.5h2v1.8h-2zM459,384.5h1v1.8h-1zM483,384.5h3v1.8h-3zM480,384.5h3v1.8h-3zM477,384.5h1v1.8h-1zM494,384.5h2v1.8h-2zM484,384.5h2v1.8h-2zM494,384.5h2v1.8h-2zM462,384.5h2v1.8h-2zM499,384.5h1v1.8h-1zM504,278.6H555V283H504zM535,283h2v1.8h-2zM512,283h1v1.8h-1zM548,283h1v1.8h-1zM548,283h2v1.8h-2zM545,283h2v1.8h-2zM508,283h2v1.8h-2zM535,283h3v1.8h-3zM542,283h2v1.8h-2zM551,283h1v1.8h-1zM526,283h2v1.8h-2zM542,283h3v1.8h-3zM537,283h2v1.8h-2zM551,283h1v1.8h-1zM511,283h3v1.8h-3zM554,381H605V384.5H554zM572,384.5h2v1.8h-2zM599,384.5h3v1.8h-3zM557,384.5h2v1.8h-2zM586,384.5h1v1.8h-1zM595,384.5h1v1.8h-1zM558,384.5h1v1.8h-1zM572,384.5h2v1.8h-2zM592,384.5h1v1.8h-1zM582,384.5h3v1.8h-3zM572,384.5h1v1.8h-1zM563,384.5h2v1.8h-2zM554,384.5h1v1.8h-1zM563,384.5h1v1.8h-1zM563,384.5h2v1.8h-2zM604,278.6H655V283H604zM619,283h1v1.8h-1zM640,283h2v1.8h-2zM606,283h2v1.8h-2zM621,283h2v1.8h-2zM608,283h2v1.8h-2zM649,283h1v1.8h-1zM649,283h3v1.8h-3zM620,283h3v1.8h-3zM649,283h1v1.8h-1zM645,283h2v1.8h-2zM613,283h1v1.8h-1zM609,283h2v1.8h-2zM648,283h1v1.8h-1zM645,283h2v1.8h-2zM654,381H705V384.5H654zM663,384.5h2v1.8h-2zM696,384.5h3v1.8h-3zM655,384.5h2v1.8h-2zM667,384.5h2v1.8h-2zM693,384.5h2v1.8h-2zM700,384.5h3v1.8h-3zM695,384.5h2v1.8h-2zM657,384.5h1v1.8h-1zM673,384.5h3v1.8h-3zM670,384.5h1v1.8h-1zM678,384.5h1v1.8h-1zM669,384.5h2v1.8h-2zM680,384.5h2v1.8h-2zM699,384.5h3v1.8h-3zM704,278.6H755V283H704zM718,283h1v1.8h-1zM726,283h1v1.8h-1zM720,283h2v1.8h-2zM743,283h1v1.8h-1zM717,283h1v1.8h-1zM704,283h2v1.8h-2zM711,283h1v1.8h-1zM705,283h2v1.8h-2zM733,283h1v1.8h-1zM721,283h2v1.8h-2zM730,283h1v1.8h-1zM705,283h1v1.8h-1zM723,283h3v1.8h-3zM736,283h1v1.8h-1zM754,381H783V384.5H754zM763,384.5h2v1.8h-2zM767,384.5h1v1.8h-1zM772,384.5h2v1.8h-2zM779,384.5h3v1.8h-3zM776,384.5h3v1.8h-3zM776,384.5h1v1.8h-1zM776,384.5h3v1.8h-3zM768,384.5h3v1.8h-3zM54,275h1.3V388.5h-1.3zM104,275h1.3V388.5h-1.3zM154,275h1.3V388.5h-1.3zM204,275h1.3V388.5h-1.3zM254,275h1.3V388.5h-1.3zM304,275h1.3V388.5h-1.3zM354,275h1.3V388.5h-1.3zM404,275h1.3V388.5h-1.3zM454,275h1.3V388.5h-1.3zM504,275h1.3V388.5h-1.3zM554,275h1.3V388.5h-1.3zM604,275h1.3V388.5h-1.3zM654,275h1.3V388.5h-1.3zM704,275h1.3V388.5h-1.3zM754,275h1.3V388.5h-1.3z" fill="#f09050"/>
<path d="M22,399H55V403H22zM50,397.2h1v1.8h-1zM40,397.2h1v1.8h-1zM33,397.2h3v1.8h-3zM27,397.2h3v1.8h-3zM30,397.2h2v1.8h-2zM25,397.2h2v1.8h-2zM47,397.2h2v1.8h-2zM22,397.2h1v1.8h-1zM49,397.2h2v1.8h-2zM54,499H105V503H54zM97,503h2v1.8h-2zM101,503h2v1.8h-2zM88,503h1v1.8h-1zM82,503h3v1.8h-3zM57,503h2v1.8h-2zM77,503h2v1.8h-2zM62,503h3v1.8h-3zM97,503h2v1.8h-2zM60,503h2v1.8h-2zM60,503h3v1.8h-3zM86,503h1v1.8h-1zM62,503h2v1.8h-2zM74,503h2v1.8h-2zM79,503h1v1.8h-1zM104,399H155V403H104zM133,397.2h1v1.8h-1zM149,397.2h3v1.8h-3zM115,397.2h1v1.8h-1zM113,397.2h2v1.8h-2zM133,397.2h2v1.8h-2zM136,397.2h2v1.8h-2zM119,397.2h1v1.8h-1zM110,397.2h1v1.8h-1zM152,397.2h1v1.8h-1zM136,397.2h1v1.8h-1zM115,397.2h1v1.8h-1zM147,397.2h2v1.8h-2zM130,397.2h2v1.8h-2zM151,397.2h3v1.8h-3zM154,499H205V503H154zM177,503h2v1.8h-2zM191,503h3v1.8h-3zM191,503h3v1.8h-3zM183,503h2v1.8h-2zM190,503h1v1.8h-1zM161,503h1v1.8h-1zM162,503h1v1.8h-1zM200,503h2v1.8h-2zM195,503h2v1.8h-2zM181,503h1v1.8h-1zM197,503h1v1.8h-1zM156,503h1v1.8h-1zM179,503h2v1.8h-2zM156,503h3v1.8h-3zM204,399H255V403H204zM252,397.2h2v1.8h-2zM245,397.2h1v1.8h-1zM236,397.2h2v1.8h-2zM222,397.2h1v1.8h-1zM241,397.2h2v1.8h-2zM239,397.2h2v1.8h-2zM226,397.2h1v1.8h-1zM211,397.2h2v1.8h-2zM237,397.2h3v1.8h-3zM239,397.2h1v1.8h-1zM204,397.2h2v1.8h-2zM249,397.2h1v1.8h-1zM210,397.2h2v1.8h-2zM244,397.2h3v1.8h-3zM254,499H305V503H254zM298,503h1v1.8h-1zM286,503h3v1.8h-3zM262,503h2v1.8h-2zM284,503h2v1.8h-2zM258,503h1v1.8h-1zM271,503h1v1.8h-1zM295,503h3v1.8h-3zM298,503h2v1.8h-2zM283,503h1v1.8h-1zM301,503h2v1.8h-2zM276,503h1v1.8h-1zM283,503h3v1.8h-3zM285,503h3v1.8h-3zM271,503h1v1.8h-1zM304,399H355V403H304zM304,397.2h2v1.8h-2zM334,397.2h2v1.8h-2zM333,397.2h1v1.8h-1zM341,397.2h1v1.8h-1zM326,397.2h2v1.8h-2zM338,397.2h3v1.8h-3zM319,397.2h2v1.8h-2zM306,397.2h3v1.8h-3zM323,397.2h2v1.8h-2zM307,397.2h1v1.8h-1zM332,397.2h2v1.8h-2zM340,397.2h1v1.8h-1zM333,397.2h2v1.8h-2zM321,397.2h1v1.8h-1zM354,499H405V503H354zM370,503h1v1.8h-1zM382,503h2v1.8h-2zM365,503h1v1.8h-1zM379,503h2v1.8h-2zM397,503h2v1.8h-2zM370,503h3v1.8h-3zM383,503h3v1.8h-3zM371,503h2v1.8h-2zM371,503h2v1.8h-2zM400,503h3v1.8h-3zM360,503h2v1.8h-2zM390,503h1v1.8h-1zM370,503h1v1.8h-1zM390,503h3v1.8h-3zM404,399H455V403H404zM441,397.2h1v1.8h-1zM444,397.2h1v1.8h-1zM434,397.2h3v1.8h-3zM426,397.2h2v1.8h-2zM451,397.2h3v1.8h-3zM451,397.2h1v1.8h-1zM452,397.2h2v1.8h-2zM444,397.2h1v1.8h-1zM416,397.2h1v1.8h-1zM412,397.2h2v1.8h-2zM433,397.2h2v1.8h-2zM445,397.2h3v1.8h-3zM452,397.2h2v1.8h-2zM448,397.2h2v1.8h-2zM454,499H505V503H454zM458,503h3v1.8h-3zM493,503h2v1.8h-2zM458,503h1v1.8h-1zM464,503h3v1.8h-3zM482,503h1v1.8h-1zM456,503h2v1.8h-2zM496,503h2v1.8h-2zM455,503h2v1.8h-2zM455,503h3v1.8h-3zM454,503h2v1.8h-2zM487,503h1v1.8h-1zM470,503h1v1.8h-1zM488,503h2v1.8h-2zM489,503h3v1.8h-3zM504,399H555V403H504zM510,397.2h3v1.8h-3zM529,397.2h2v1.8h-2zM546,397.2h2v1.8h-2zM521,397.2h2v1.8h-2zM521,397.2h1v1.8h-1zM549,397.2h1v1.8h-1zM551,397.2h3v1.8h-3zM527,397.2h2v1.8h-2zM512,397.2h1v1.8h-1zM538,397.2h2v1.8h-2zM534,397.2h2v1.8h-2zM517,397.2h1v1.8h-1zM514,397.2h1v1.8h-1zM545,397.2h1v1.8h-1zM554,499H605V503H554zM578,503h2v1.8h-2zM574,503h3v1.8h-3zM600,503h2v1.8h-2zM569,503h1v1.8h-1zM580,503h1v1.8h-1zM576,503h2v1.8h-2zM583,503h3v1.8h-3zM556,503h1v1.8h-1zM565,503h1v1.8h-1zM565,503h1v1.8h-1zM578,503h2v1.8h-2zM598,503h1v1.8h-1zM580,503h1v1.8h-1zM594,503h1v1.8h-1zM604,399H655V403H604zM607,397.2h2v1.8h-2zM637,397.2h1v1.8h-1zM647,397.2h2v1.8h-2zM646,397.2h2v1.8h-2zM606,397.2h2v1.8h-2zM615,397.2h1v1.8h-1zM608,397.2h3v1.8h-3zM618,397.2h1v1.8h-1zM625,397.2h2v1.8h-2zM625,397.2h1v1.8h-1zM615,397.2h2v1.8h-2zM644,397.2h2v1.8h-2zM604,397.2h3v1.8h-3zM622,397.2h1v1.8h-1zM654,499H705V503H654zM689,503h1v1.8h-1zM688,503h1v1.8h-1zM701,503h1v1.8h-1zM677,503h2v1.8h-2zM664,503h1v1.8h-1zM678,503h2v1.8h-2zM674,503h1v1.8h-1zM679,503h1v1.8h-1zM699,503h2v1.8h-2zM697,503h2v1.8h-2zM702,503h1v1.8h-1zM662,503h2v1.8h-2zM700,503h1v1.8h-1zM702,503h1v1.8h-1zM704,399H755V403H704zM710,397.2h1v1.8h-1zM720,397.2h3v1.8h-3zM744,397.2h2v1.8h-2zM709,397.2h1v1.8h-1zM710,397.2h1v1.8h-1zM705,397.2h2v1.8h-2zM735,397.2h3v1.8h-3zM710,397.2h2v1.8h-2zM726,397.2h2v1.8h-2zM728,397.2h1v1.8h-1zM734,397.2h1v1.8h-1zM737,397.2h2v1.8h-2zM747,397.2h1v1.8h-1zM744,397.2h1v1.8h-1zM754,499H783V503H754zM762,503h1v1.8h-1zM755,503h2v1.8h-2zM766,503h1v1.8h-1zM761,503h2v1.8h-2zM774,503h2v1.8h-2zM774,503h2v1.8h-2zM762,503h3v1.8h-3zM755,503h3v1.8h-3zM54,395h1.3V506.5h-1.3zM104,395h1.3V506.5h-1.3zM154,395h1.3V506.5h-1.3zM204,395h1.3V506.5h-1.3zM254,395h1.3V506.5h-1.3zM304,395h1.3V506.5h-1.3zM354,395h1.3V506.5h-1.3zM404,395h1.3V506.5h-1.3zM454,395h1.3V506.5h-1.3zM504,395h1.3V506.5h-1.3zM554,395h1.3V506.5h-1.3zM604,395h1.3V506.5h-1.3zM654,395h1.3V506.5h-1.3zM704,395h1.3V506.5h-1.3zM754,395h1.3V506.5h-1.3z" fill="#a8f050"/>
<circle cx="333.5" cy="62" r="8.5" fill="none" stroke="#c4e4f4" stroke-width="1.2"/>
<text transform="translate(329.50,65.50) scale(0.8979,1)" font-family="Liberation Sans, sans-serif" font-size="13.01" fill="#c4e4f4" style="white-space:pre">a</text>
<circle cx="413.5" cy="62" r="8.5" fill="none" stroke="#c4e4f4" stroke-width="1.2"/>
<text transform="translate(409.64,65.50) scale(1.0177,1)" font-family="Liberation Sans, sans-serif" font-size="13.11" fill="#c4e4f4" style="white-space:pre">b</text>
<path d="M396.5,20.5H407.5V30L402,35.5L396.5,30Z" fill="#0a0505" stroke="#e4b848" stroke-width="1.2"/>
<path d="M398.5,24.5H405.5M402,24.5V31" stroke="#e4b848" stroke-width="1.6"/>
<path d="M0,92.0H13.5L20,98.3L13.5,104.6H0L4.8,98.3Z" fill="#f0e048"/><text transform="translate(7.83,102.20) scale(0.6546,1)" font-family="Liberation Sans, sans-serif" font-size="11.34" fill="#111" stroke="#111" stroke-width="0.8" style="white-space:pre">1</text>
<path d="M0,191.7H13.5L20,198L13.5,204.3H0L4.8,198Z" fill="#050818" stroke="#b0c8f0" stroke-width="1.3"/><text transform="translate(6.60,201.90) scale(1.0611,1)" font-family="Liberation Sans, sans-serif" font-size="11.17" fill="#b0c8f0" stroke="#b0c8f0" stroke-width="0.8" style="white-space:pre">2</text>
<path d="M0,339.0H13.5L20,345.3L13.5,351.6H0L4.8,345.3Z" fill="#050818" stroke="#f0a070" stroke-width="1.3"/><text transform="translate(6.77,349.20) scale(1.0196,1)" font-family="Liberation Sans, sans-serif" font-size="11.17" fill="#f0a070" stroke="#f0a070" stroke-width="0.8" style="white-space:pre">3</text>
<path d="M0,447.0H13.5L20,453.3L13.5,459.6H0L4.8,453.3Z" fill="#050818" stroke="#a8e858" stroke-width="1.3"/><text transform="translate(6.95,457.20) scale(0.9452,1)" font-family="Liberation Sans, sans-serif" font-size="11.34" fill="#a8e858" stroke="#a8e858" stroke-width="0.8" style="white-space:pre">4</text>
<path d="M110,2.5L120.5,9.5L110,16.5Z" fill="#a8e040"/>
<text transform="translate(145.63,15.00) scale(1.0877,1)" font-family="Liberation Sans, sans-serif" font-size="15.18" fill="#f4f4f4" style="white-space:pre">Trig</text>
<circle cx="208.7" cy="9.2" r="7.8" fill="none" stroke="#e8e8e8" stroke-width="1.2"/>
<text transform="translate(203.97,14.00) scale(1.0376,1)" font-family="Liberation Sans, sans-serif" font-size="13.81" fill="#e8e8e8" style="white-space:pre">A</text>
<path d="M253.5,1.8V18.7M253.5,2.4H257M253.5,18H257M293.5,5.2V18.7M293.5,5.8H296.5M293.5,18H296.5M257,9.8H547M511.5,1.6V18.7M511.5,2.2H508.5M511.5,18H508.5M551,1.6V18.7M551,2.2H547M551,18H547" stroke="#b4b0b4" stroke-width="1.5" fill="none"/>
<path d="M399,2.5Q400.5,1.5 401.5,3Q402.5,1.5 404,2.5L404,4.5L401.5,7L399,4.5Z" fill="#a8a8a8"/>
<text transform="translate(559.65,15.00) scale(1.0819,1)" font-family="Liberation Sans, sans-serif" font-size="14.32" fill="#f4f4f4" style="white-space:pre">T:0.000ns</text>
<rect x="665.6" y="7.6" width="10" height="8.8" fill="none" stroke="#ececec" stroke-width="1.3"/><path d="M675.6,7.6V5.5Q675.3,2.4 671.2,2.4Q668.5,2.4 666.6,3.6" fill="none" stroke="#ececec" stroke-width="1.3"/><path d="M670.6,10V14.5" stroke="#ececec" stroke-opacity="0.25" stroke-width="1"/>
<path d="M784,85.5L800,78.5V80.8L796.3,85.5L800,90.2V92.5Z" fill="#f0e048"/>
<rect x="26" y="357" width="186" height="159.7" fill="#21202f" stroke="#7c7aa2" stroke-width="2"/>
<rect x="31" y="360" width="16" height="16" fill="#f0e048"/><text transform="translate(35.10,372.60) scale(1.000,1)" font-family="Liberation Sans, sans-serif" font-size="13.37" fill="#111" stroke="#111" stroke-width="0.8" stroke-linejoin="round">1</text>
<path d="M67.7,374.4L73.5,362.7L79.3,374.4Z" fill="none" stroke="#ececec" stroke-width="1.2"/>
<text transform="translate(80.56,373.00) scale(1.1695,1)" font-family="Liberation Sans, sans-serif" font-size="13.25" fill="#ececec" style="white-space:pre">y:</text>
<text transform="translate(97.96,373.00) scale(1.0396,1)" font-family="Liberation Sans, sans-serif" font-size="15.04" fill="#ececec" style="white-space:pre">2.08V</text>
<text transform="translate(66.97,395.00) scale(0.7588,1)" font-family="Liberation Sans, sans-serif" font-size="15.41" fill="#ececec" style="white-space:pre">y1:</text>
<text transform="translate(90.16,395.00) scale(0.9428,1)" font-family="Liberation Sans, sans-serif" font-size="15.18" fill="#ececec" style="white-space:pre">1.08V</text>
<text transform="translate(67.57,416.80) scale(0.8179,1)" font-family="Liberation Sans, sans-serif" font-size="15.18" fill="#ececec" style="white-space:pre">y2:</text>
<text transform="translate(93.03,416.80) scale(1.0003,1)" font-family="Liberation Sans, sans-serif" font-size="15.18" fill="#ececec" style="white-space:pre">-1.00V</text>
<path d="M67.7,442.0L73.5,432.09999999999997L79.3,442.0Z" fill="none" stroke="#ececec" stroke-width="1.2"/>
<text transform="translate(80.33,442.00) scale(1.1735,1)" font-family="Liberation Sans, sans-serif" font-size="13.25" fill="#ececec" style="white-space:pre">x:</text>
<text transform="translate(98.14,442.00) scale(0.9129,1)" font-family="Liberation Sans, sans-serif" font-size="15.18" fill="#ececec" style="white-space:pre">1.010ms</text>
<text transform="translate(67.16,463.00) scale(1.0410,1)" font-family="Liberation Sans, sans-serif" font-size="13.80" fill="#ececec" style="white-space:pre">1/x:</text>
<text transform="translate(95.11,463.00) scale(1.0316,1)" font-family="Liberation Sans, sans-serif" font-size="14.32" fill="#ececec" style="white-space:pre">990.1Hz</text>
<text transform="translate(66.75,485.00) scale(0.8649,1)" font-family="Liberation Sans, sans-serif" font-size="15.12" fill="#ececec" style="white-space:pre">x1:</text>
<text transform="translate(89.89,485.00) scale(1.0516,1)" font-family="Liberation Sans, sans-serif" font-size="14.89" fill="#ececec" style="white-space:pre">0.790ms</text>
<text transform="translate(66.75,506.50) scale(0.8694,1)" font-family="Liberation Sans, sans-serif" font-size="15.04" fill="#ececec" style="white-space:pre">x2:</text>
<text transform="translate(92.99,506.50) scale(1.0671,1)" font-family="Liberation Sans, sans-serif" font-size="15.04" fill="#ececec" style="white-space:pre">-0.220ms</text>
<rect x="212.5" y="435" width="320" height="82" fill="#20202f" stroke="#5c5c86" stroke-width="2"/>
<path d="M212,455.5H533M212,476.5H533M212,497H533M373.5,435V517" stroke="#5c5c86" stroke-width="2"/>
<rect x="215" y="437.0" width="16" height="15.8" fill="#e88848"/><text transform="translate(219.77,449.00) scale(1.000,1)" font-family="Liberation Sans, sans-serif" font-size="11.74" fill="#111" stroke="#111" stroke-width="0.8" stroke-linejoin="round">3</text>
<text transform="translate(234.05,449.80) scale(1.0829,1)" font-family="Liberation Sans, sans-serif" font-size="14.54" fill="#ececec" style="white-space:pre">T</text>
<text transform="translate(249.56,449.80) scale(1.1097,1)" font-family="Liberation Sans, sans-serif" font-size="14.20" fill="#ececec" style="white-space:pre">:</text>
<text transform="translate(260.09,449.80) scale(1.0165,1)" font-family="Liberation Sans, sans-serif" font-size="14.32" fill="#ececec" style="white-space:pre">1.000ms</text>
<rect x="375" y="437.0" width="16" height="15.8" fill="#a0f048"/><text transform="translate(379.72,449.00) scale(1.000,1)" font-family="Liberation Sans, sans-serif" font-size="11.92" fill="#111" stroke="#111" stroke-width="0.8" stroke-linejoin="round">4</text>
<text transform="translate(394.05,449.80) scale(1.0829,1)" font-family="Liberation Sans, sans-serif" font-size="14.54" fill="#ececec" style="white-space:pre">T</text>
<text transform="translate(409.56,449.80) scale(1.1097,1)" font-family="Liberation Sans, sans-serif" font-size="14.20" fill="#ececec" style="white-space:pre">:</text>
<text transform="translate(420.09,449.80) scale(1.0165,1)" font-family="Liberation Sans, sans-serif" font-size="14.32" fill="#ececec" style="white-space:pre">1.000ms</text>
<rect x="215" y="457.8" width="16" height="15.8" fill="#f0e048"/><text transform="translate(219.52,469.80) scale(1.000,1)" font-family="Liberation Sans, sans-serif" font-size="11.92" fill="#111" stroke="#111" stroke-width="0.8" stroke-linejoin="round">1</text>
<text transform="translate(234.05,470.60) scale(1.0829,1)" font-family="Liberation Sans, sans-serif" font-size="14.54" fill="#ececec" style="white-space:pre">T</text>
<text transform="translate(249.56,470.60) scale(1.1097,1)" font-family="Liberation Sans, sans-serif" font-size="14.20" fill="#ececec" style="white-space:pre">:</text>
<text transform="translate(260.09,470.60) scale(1.0165,1)" font-family="Liberation Sans, sans-serif" font-size="14.32" fill="#ececec" style="white-space:pre">1.000ms</text>
<rect x="375" y="457.8" width="16" height="15.8" fill="#a8c4f4"/><text transform="translate(379.73,469.80) scale(1.000,1)" font-family="Liberation Sans, sans-serif" font-size="11.74" fill="#111" stroke="#111" stroke-width="0.8" stroke-linejoin="round">2</text>
<text transform="translate(394.05,470.60) scale(1.0829,1)" font-family="Liberation Sans, sans-serif" font-size="14.54" fill="#ececec" style="white-space:pre">T</text>
<text transform="translate(409.56,470.60) scale(1.1097,1)" font-family="Liberation Sans, sans-serif" font-size="14.20" fill="#ececec" style="white-space:pre">:</text>
<text transform="translate(420.09,470.60) scale(1.0165,1)" font-family="Liberation Sans, sans-serif" font-size="14.32" fill="#ececec" style="white-space:pre">1.000ms</text>
<rect x="215" y="478.6" width="16" height="15.8" fill="#e88848"/><text transform="translate(219.77,490.60) scale(1.000,1)" font-family="Liberation Sans, sans-serif" font-size="11.74" fill="#111" stroke="#111" stroke-width="0.8" stroke-linejoin="round">3</text>
<text transform="translate(234.56,491.40) scale(0.9572,1)" font-family="Liberation Sans, sans-serif" font-size="14.54" fill="#ececec" style="white-space:pre">F</text>
<text transform="translate(249.56,491.40) scale(1.1097,1)" font-family="Liberation Sans, sans-serif" font-size="14.20" fill="#ececec" style="white-space:pre">:</text>
<text transform="translate(260.05,491.40) scale(1.0509,1)" font-family="Liberation Sans, sans-serif" font-size="14.32" fill="#ececec" style="white-space:pre">1.000KHz</text>
<rect x="375" y="478.6" width="16" height="15.8" fill="#a0f048"/><text transform="translate(379.72,490.60) scale(1.000,1)" font-family="Liberation Sans, sans-serif" font-size="11.92" fill="#111" stroke="#111" stroke-width="0.8" stroke-linejoin="round">4</text>
<text transform="translate(394.56,491.40) scale(0.9572,1)" font-family="Liberation Sans, sans-serif" font-size="14.54" fill="#ececec" style="white-space:pre">F</text>
<text transform="translate(409.56,491.40) scale(1.1097,1)" font-family="Liberation Sans, sans-serif" font-size="14.20" fill="#ececec" style="white-space:pre">:</text>
<text transform="translate(420.05,491.40) scale(1.0509,1)" font-family="Liberation Sans, sans-serif" font-size="14.32" fill="#ececec" style="white-space:pre">1.000KHz</text>
<rect x="215" y="499.4" width="16" height="15.8" fill="#f0e048"/><text transform="translate(219.52,511.40) scale(1.000,1)" font-family="Liberation Sans, sans-serif" font-size="11.92" fill="#111" stroke="#111" stroke-width="0.8" stroke-linejoin="round">1</text>
<text transform="translate(234.56,512.20) scale(0.9572,1)" font-family="Liberation Sans, sans-serif" font-size="14.54" fill="#ececec" style="white-space:pre">F</text>
<text transform="translate(249.56,512.20) scale(1.1097,1)" font-family="Liberation Sans, sans-serif" font-size="14.20" fill="#ececec" style="white-space:pre">:</text>
<text transform="translate(260.05,512.20) scale(1.0509,1)" font-family="Liberation Sans, sans-serif" font-size="14.32" fill="#ececec" style="white-space:pre">1.000KHz</text>
<rect x="375" y="499.4" width="16" height="15.8" fill="#a8c4f4"/><text transform="translate(379.73,511.40) scale(1.000,1)" font-family="Liberation Sans, sans-serif" font-size="11.74" fill="#111" stroke="#111" stroke-width="0.8" stroke-linejoin="round">2</text>
<text transform="translate(394.56,512.20) scale(0.9572,1)" font-family="Liberation Sans, sans-serif" font-size="14.54" fill="#ececec" style="white-space:pre">F</text>
<text transform="translate(409.56,512.20) scale(1.1097,1)" font-family="Liberation Sans, sans-serif" font-size="14.20" fill="#ececec" style="white-space:pre">:</text>
<text transform="translate(420.05,512.20) scale(1.0509,1)" font-family="Liberation Sans, sans-serif" font-size="14.32" fill="#ececec" style="white-space:pre">1.000KHz</text>
<rect x="590.5" y="498.5" width="159.5" height="19" fill="#20202f" stroke="#5c5c86" stroke-width="1.6"/>
<rect x="592" y="500.5" width="16" height="16.3" fill="#f0e048"/><text transform="translate(595.81,512.80) scale(1.000,1)" font-family="Liberation Sans, sans-serif" font-size="12.65" fill="#111" stroke="#111" stroke-width="0.8" stroke-linejoin="round">1</text>
<text transform="translate(630.66,513.90) scale(1.0564,1)" font-family="Liberation Sans, sans-serif" font-size="15.04" fill="#ece078" style="white-space:pre">999.965Hz</text>
<text transform="translate(19.97,538.00) scale(1.0403,1)" font-family="Liberation Sans, sans-serif" font-size="15.04" fill="#f0f0f0" style="white-space:pre">M: 500us</text>
<text transform="translate(139.04,538.00) scale(1.0732,1)" font-family="Liberation Sans, sans-serif" font-size="14.49" fill="#f0f0f0" style="white-space:pre">(1MS/s)</text>
<text transform="translate(260.65,537.75) scale(1.0178,1)" font-family="Liberation Sans, sans-serif" font-size="14.97" fill="#f0f0f0" style="white-space:pre">Depth:10K</text>
<text transform="translate(628.22,539.40) scale(0.9777,1)" font-family="Liberation Sans, sans-serif" font-size="15.75" fill="#e8e070" style="white-space:pre">CH1:DC-</text>
<path d="M692,539.3H700.3L704.2,526.6H711.7" fill="none" stroke="#e8e070" stroke-width="1.6"/>
<text transform="translate(715.20,539.40) scale(1.0091,1)" font-family="Liberation Sans, sans-serif" font-size="15.75" fill="#e8e070" style="white-space:pre">260mV</text>
<rect x="0" y="541" width="800" height="59" fill="#0c0a12"/>
<rect x="0" y="542" width="72" height="58" fill="#2a2142"/><rect x="0.6" y="542.6" width="70.8" height="56.8" fill="none" stroke="#e8e068" stroke-width="1.2"/><rect x="3" y="549" width="16" height="16" fill="#f0e048"/><text transform="translate(7.10,561.40) scale(1.000,1)" font-family="Liberation Sans, sans-serif" font-size="13.37" fill="#111" stroke="#111" stroke-width="0.8" stroke-linejoin="round">1</text><path d="M22,558.5h5" stroke="#f8f090" stroke-width="1.2"/><text transform="translate(2.89,586.00) scale(0.8870,1)" font-family="Liberation Sans, sans-serif" font-size="16.47" fill="#f8f090" stroke="#2a2142" stroke-width="0.3" style="white-space:pre">1.00V</text>
<rect x="72.5" y="542" width="71" height="58" fill="#2a2142"/><path d="M72.5,542.5H143.5" stroke="#7c7888" stroke-width="1"/><rect x="75" y="549" width="16" height="16" fill="#a8c4f4"/><text transform="translate(79.34,561.40) scale(1.000,1)" font-family="Liberation Sans, sans-serif" font-size="13.18" fill="#111" stroke="#111" stroke-width="0.8" stroke-linejoin="round">2</text><path d="M94,558.5h5" stroke="#bcd4fa" stroke-width="1.2"/><text transform="translate(75.16,586.00) scale(0.8690,1)" font-family="Liberation Sans, sans-serif" font-size="16.47" fill="#bcd4fa" stroke="#2a2142" stroke-width="0.3" style="white-space:pre">1.00V</text>
<rect x="144" y="542" width="71.5" height="58" fill="#2a2142"/><path d="M144,542.5H215.5" stroke="#7c7888" stroke-width="1"/><rect x="147" y="549" width="16" height="16" fill="#e88848"/><text transform="translate(151.37,561.40) scale(1.000,1)" font-family="Liberation Sans, sans-serif" font-size="13.18" fill="#111" stroke="#111" stroke-width="0.8" stroke-linejoin="round">3</text><path d="M166,558.5h5" stroke="#f09058" stroke-width="1.2"/><text transform="translate(147.30,586.00) scale(0.8774,1)" font-family="Liberation Sans, sans-serif" font-size="16.47" fill="#f09058" stroke="#2a2142" stroke-width="0.3" style="white-space:pre">1.00V</text>
<rect x="216" y="542" width="71.5" height="58" fill="#2a2142"/><path d="M216,542.5H287.5" stroke="#7c7888" stroke-width="1"/><rect x="219.2" y="549" width="16" height="16" fill="#a0f048"/><text transform="translate(223.52,561.40) scale(1.000,1)" font-family="Liberation Sans, sans-serif" font-size="13.37" fill="#111" stroke="#111" stroke-width="0.8" stroke-linejoin="round">4</text><path d="M238.2,558.5h5" stroke="#c8f47c" stroke-width="1.2"/><text transform="translate(219.62,586.00) scale(0.8630,1)" font-family="Liberation Sans, sans-serif" font-size="16.47" fill="#c8f47c" stroke="#2a2142" stroke-width="0.3" style="white-space:pre">1.00V</text>
<path d="M143.5,542V600M215.5,542V600" stroke="#14101c" stroke-width="1.2"/>
<path d="M288,542V600" stroke="#8a8898" stroke-width="1.2"/>
<rect x="289" y="542" width="92" height="58" fill="#3c3a58"/>
<rect x="310.8" y="548.8" width="47.2" height="20.3" fill="#c8c8cc"/><text transform="translate(311.14,563.90) scale(1.1202,1)" font-family="Liberation Sans, sans-serif" font-size="14.21" fill="#000" style="white-space:pre">Time&amp;</text>
<rect x="307" y="572.9" width="56" height="20.3" fill="#c8c8cc"/><text transform="translate(307.83,587.30) scale(1.1868,1)" font-family="Liberation Sans, sans-serif" font-size="13.66" fill="#000" style="white-space:pre">Voltage</text>
<rect x="382.5" y="542" width="90.5" height="58" fill="#3c3a58"/>
<text transform="translate(390.95,563.60) scale(1.1342,1)" font-family="Liberation Sans, sans-serif" font-size="14.49" fill="#f0f0f0" style="white-space:pre">Line Type</text>
<rect x="409.2" y="572.9" width="34.8" height="19.3" fill="#c8c8cc"/><text transform="translate(409.15,587.70) scale(1.0487,1)" font-family="Liberation Sans, sans-serif" font-size="15.04" fill="#000" style="white-space:pre">Time</text>
<rect x="473.5" y="542" width="91.8" height="58" fill="#69656d"/>
<text transform="translate(490.33,563.60) scale(1.1112,1)" font-family="Liberation Sans, sans-serif" font-size="14.08" fill="#f0f0f0" style="white-space:pre">Window</text>
<rect x="501.8" y="572.9" width="33" height="19.3" fill="#c8c8cc"/><text transform="translate(502.36,587.70) scale(1.0068,1)" font-family="Liberation Sans, sans-serif" font-size="15.04" fill="#000" style="white-space:pre">Main</text>
<rect x="566.3" y="542" width="91" height="58" fill="#3c3a58"/>
<text transform="translate(595.59,563.60) scale(1.0992,1)" font-family="Liberation Sans, sans-serif" font-size="14.49" fill="#f0f0f0" style="white-space:pre">Line</text>
<text transform="translate(570.95,588.30) scale(1.0475,1)" font-family="Liberation Sans, sans-serif" font-size="14.68" fill="#f0f0f0" style="white-space:pre">a</text>
<rect x="607.8" y="574" width="9.4" height="20" fill="#c8c8cc"/><text transform="translate(607.65,588.30) scale(1.0993,1)" font-family="Liberation Sans, sans-serif" font-size="14.77" fill="#000" style="white-space:pre">b</text>
<text transform="translate(628.35,588.30) scale(1.0344,1)" font-family="Liberation Sans, sans-serif" font-size="14.77" fill="#f0f0f0" style="white-space:pre">ab</text>
<rect x="658.3" y="542" width="91" height="58" fill="#3c3a58"/>
<text transform="translate(677.26,563.80) scale(1.0762,1)" font-family="Liberation Sans, sans-serif" font-size="15.18" fill="#f0f0f0" style="white-space:pre">Source</text>
<rect x="688" y="573" width="29" height="20" fill="#c8c8cc"/><text transform="translate(688.06,587.50) scale(0.9421,1)" font-family="Liberation Sans, sans-serif" font-size="15.47" fill="#000" style="white-space:pre">CH1</text>
<rect x="750" y="542" width="50" height="58" fill="#666890"/>
<path d="M381.5,542V600M473,542V600M565.5,542V600M657.5,542V600M749.5,542V600" stroke="#06060e" stroke-width="1.2"/>
<path d="M289,542.8H381M382,542.8H473M566,542.8H657M658,542.8H749M750,542.8H800" stroke="#ffffff" stroke-opacity="0.08" stroke-width="1.6"/>
<path d="M775.5,560L765,570H768V579.3H773.8V573.8H778V579.3H784.2V570H786Z" fill="#ffffff"/>
</svg>
</body></html>
